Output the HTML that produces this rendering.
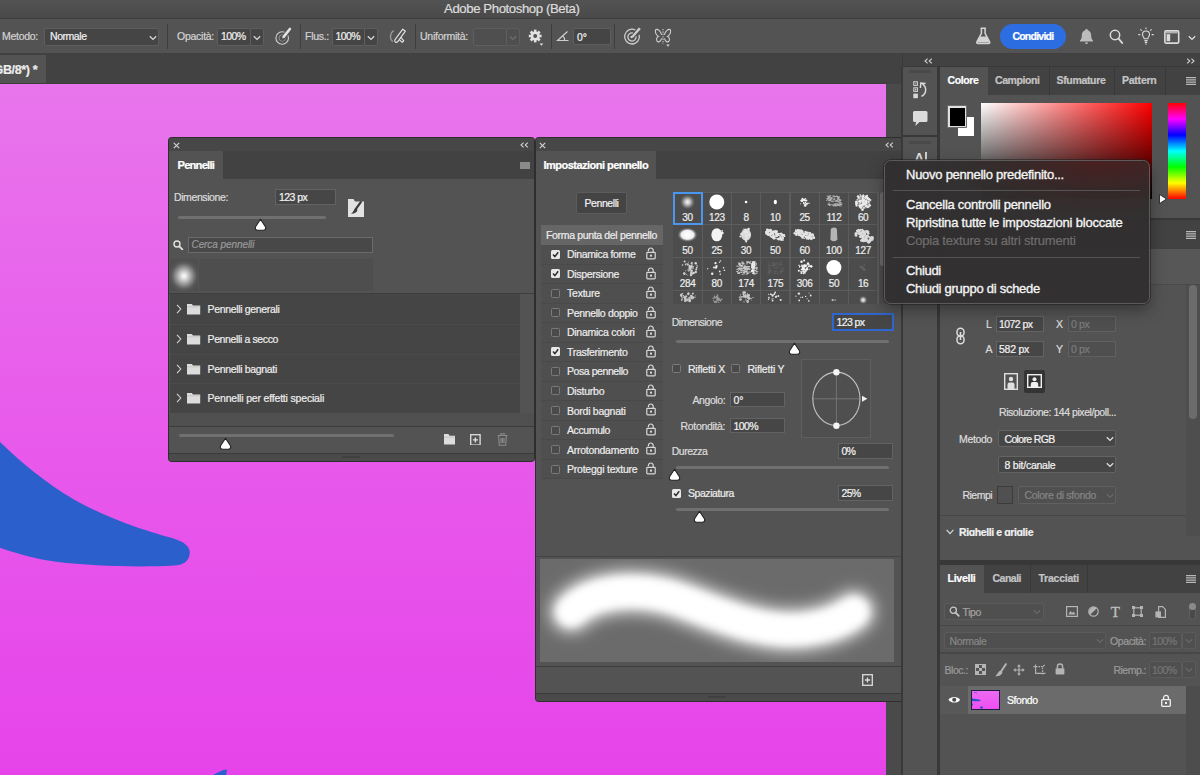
<!DOCTYPE html>
<html lang="it"><head><meta charset="utf-8"><title>Adobe Photoshop (Beta)</title>
<style>
*{box-sizing:border-box;margin:0;padding:0}
html,body{width:1200px;height:775px;overflow:hidden;background:#4a4a4a}
body{font-family:"Liberation Sans",sans-serif;font-size:10.5px;color:#d6d6d6;position:relative}
.abs{position:absolute}
.t{position:absolute;white-space:nowrap;line-height:14px;-webkit-text-stroke:0.22px currentColor}
</style></head><body>
<div class="abs" style="left:0.0px;top:0.0px;width:1200.0px;height:18.0px;background:linear-gradient(180deg,#535353,#4a4a4a);"></div>
<div class="abs" style="left:0.0px;top:18.0px;width:1200.0px;height:1.0px;background:#3b3b3b;"></div>
<div class="t" style="left:444.0px;top:1.6px;font-size:13.2px;color:#dcdcdc;letter-spacing:-0.41px;">Adobe Photoshop (Beta)</div>
<div class="abs" style="left:0.0px;top:19.0px;width:1200.0px;height:35.0px;background:#535353;"></div>
<div class="abs" style="left:0.0px;top:53.0px;width:1200.0px;height:1.0px;background:#404040;"></div>
<div class="abs" style="left:0.0px;top:54.0px;width:903.0px;height:30.0px;background:#424242;"></div>
<div class="abs" style="left:0.0px;top:55.0px;width:46.0px;height:29.0px;background:#535353;"></div>
<div class="t" style="left:-6.5px;top:62.5px;font-size:12.5px;color:#ececec;letter-spacing:-0.34px;font-weight:bold;">GB/8*) *</div>
<div class="abs" style="left:0.0px;top:83.0px;width:886.0px;height:1.0px;background:#3c3e3c;"></div>
<div class="t" style="left:2.0px;top:28.8px;font-size:10.5px;color:#d2d2d2;letter-spacing:-0.28px;">Metodo:</div>
<div class="abs" style="left:44.0px;top:28.0px;width:115.0px;height:17.5px;background:#454545;border:1px solid #5e5e5e;border-radius:2px;"></div>
<div class="t" style="left:50.0px;top:28.8px;font-size:10.5px;color:#f0f0f0;letter-spacing:-0.45px;">Normale</div>
<svg class="abs" style="left:149.0px;top:34.5px;" width="8" height="6" viewBox="0 0 8 6"><path d="M0.8 1.2 L4 4.4 L7.2 1.2" fill="none" stroke="#d8d8d8" stroke-width="1.3"/></svg>
<div class="abs" style="left:167.0px;top:24.0px;width:1.0px;height:25.0px;background:#3e3e3e;"></div>
<div class="t" style="left:177.0px;top:28.8px;font-size:10.5px;color:#d2d2d2;letter-spacing:-0.26px;">Opacità:</div>
<div class="abs" style="left:217.0px;top:28.0px;width:34.0px;height:17.5px;background:#454545;border:1px solid #5e5e5e;border-radius:2px;"></div>
<div class="abs" style="left:250.0px;top:28.0px;width:14.0px;height:17.5px;background:#454545;border:1px solid #5e5e5e;border-radius:2px;"></div>
<div class="t" style="left:221.0px;top:28.8px;font-size:10.5px;color:#f0f0f0;letter-spacing:-0.59px;">100%</div>
<svg class="abs" style="left:253.0px;top:34.5px;" width="8" height="6" viewBox="0 0 8 6"><path d="M0.8 1.2 L4 4.4 L7.2 1.2" fill="none" stroke="#d8d8d8" stroke-width="1.3"/></svg>
<svg class="abs" style="left:273.0px;top:26.0px;" width="22" height="22" viewBox="0 0 22 22"><circle cx="9.200" cy="12" r="6.300" fill="none" stroke="#cfcfcf" stroke-width="1.100"/><circle cx="9.200" cy="12" r="3.200" fill="none" stroke="#8e8e8e" stroke-width="1"/><path d="M9.400 12.400 L16.800 3.200" stroke="#535353" stroke-width="4.600" stroke-linecap="round"/><path d="M10.800 10.600 L16.900 3" stroke="#e4e4e4" stroke-width="2.600" stroke-linecap="round"/><path d="M9 12.600 L10.400 9.600 L12 11Z" fill="#e4e4e4"/></svg>
<div class="abs" style="left:300.0px;top:24.0px;width:1.0px;height:25.0px;background:#3e3e3e;"></div>
<div class="t" style="left:305.0px;top:28.8px;font-size:10.5px;color:#d2d2d2;letter-spacing:-0.28px;">Flus.:</div>
<div class="abs" style="left:332.0px;top:28.0px;width:33.0px;height:17.5px;background:#454545;border:1px solid #5e5e5e;border-radius:2px;"></div>
<div class="abs" style="left:364.0px;top:28.0px;width:14.0px;height:17.5px;background:#454545;border:1px solid #5e5e5e;border-radius:2px;"></div>
<div class="t" style="left:335.5px;top:28.8px;font-size:10.5px;color:#f0f0f0;letter-spacing:-0.59px;">100%</div>
<svg class="abs" style="left:367.0px;top:34.5px;" width="8" height="6" viewBox="0 0 8 6"><path d="M0.8 1.2 L4 4.4 L7.2 1.2" fill="none" stroke="#d8d8d8" stroke-width="1.3"/></svg>
<svg class="abs" style="left:386.0px;top:26.0px;" width="24" height="22" viewBox="0 0 24 22"><path d="M7.600 4.600 A7 7 0 0 0 6.600 15.600" fill="none" stroke="#9a9a9a" stroke-width="1.500"/><g fill="#535353" stroke="#e4e4e4" stroke-width="1.100" stroke-linejoin="round"><path d="M12.800 13.200 L16.200 16.400 L17.800 14.800 L14.800 11.400Z"/><path d="M16.800 3.200 L19.400 5.200 L11.600 15.800 Q9.800 17.200 8.800 15.200 Q8.600 14.200 9.200 13.400 Z"/></g></svg>
<div class="abs" style="left:415.0px;top:24.0px;width:1.0px;height:25.0px;background:#3e3e3e;"></div>
<div class="t" style="left:420.0px;top:28.8px;font-size:10.5px;color:#d2d2d2;letter-spacing:-0.25px;">Uniformità:</div>
<div class="abs" style="left:473.0px;top:28.0px;width:34.0px;height:17.5px;background:#4f4f4f;border:1px solid #5e5e5e;border-radius:2px;"></div>
<div class="abs" style="left:506.0px;top:28.0px;width:14.0px;height:17.5px;background:#4f4f4f;border:1px solid #5e5e5e;border-radius:2px;"></div>
<svg class="abs" style="left:509.0px;top:34.5px;" width="8" height="6" viewBox="0 0 8 6"><path d="M0.8 1.2 L4 4.4 L7.2 1.2" fill="none" stroke="#6e6e6e" stroke-width="1.3"/></svg>
<svg class="abs" style="left:526.0px;top:27.0px;" width="22" height="22" viewBox="0 0 22 22"><g transform="translate(9.200 9)"><g fill="#e2e2e2"><rect x="-1.300" y="-6.400" width="2.600" height="12.800"/><rect x="-1.300" y="-6.400" width="2.600" height="12.800" transform="rotate(45)"/><rect x="-1.300" y="-6.400" width="2.600" height="12.800" transform="rotate(90)"/><rect x="-1.300" y="-6.400" width="2.600" height="12.800" transform="rotate(135)"/><circle r="4.600"/></g><circle r="2" fill="#535353"/></g><path d="M13.600 16.600 h3.600 l-1.800 2.200z" fill="#e2e2e2"/></svg>
<div class="abs" style="left:551.0px;top:24.0px;width:1.0px;height:25.0px;background:#3e3e3e;"></div>
<svg class="abs" style="left:556.0px;top:29.0px;" width="14" height="14" viewBox="0 0 14 14"><g fill="none" stroke="#cfcfcf" stroke-width="1.2"><path d="M11.5 2.5 L1.5 11.5 H12.5"/><path d="M6.8 6.9 A5.5 5.5 0 0 1 8.6 11.4"/></g></svg>
<div class="abs" style="left:573.0px;top:28.0px;width:38.0px;height:17.0px;background:#454545;border:1px solid #5e5e5e;border-radius:2px;"></div>
<div class="t" style="left:577.0px;top:29.5px;font-size:10.5px;color:#f0f0f0;">0°</div>
<div class="abs" style="left:614.0px;top:24.0px;width:1.0px;height:25.0px;background:#3e3e3e;"></div>
<svg class="abs" style="left:621.0px;top:25.0px;" width="24" height="24" viewBox="0 0 24 24"><g fill="none" stroke="#cfcfcf" stroke-width="1.3"><path d="M14.4 5 A7.4 7.4 0 1 0 18.2 9.8"/><path d="M11.8 8 A4.1 4.1 0 1 0 15 11.4"/></g><circle cx="10.6" cy="12" r="1.3" fill="#cfcfcf"/><path d="M10.4 11.4 L17.8 2.4 L19.8 4 L12 12.8 Z" fill="#cfcfcf"/></svg>
<svg class="abs" style="left:653.5px;top:27.5px;" width="18" height="20" viewBox="0 0 18 20"><g fill="none" stroke="#cfcfcf" stroke-width="1.100"><path d="M7.600 6.800 C6.600 2.600 3.600 0.800 1.800 1.600 C0.800 3.200 1.600 7 4.400 8.400 C2.600 9 2.200 11.400 3 13.200 C4.600 14.800 6.800 13.200 7.600 10.400"/><path d="M10.400 6.800 C11.400 2.600 14.400 0.800 16.200 1.600 C17.200 3.200 16.400 7 13.600 8.400 C15.400 9 15.800 11.400 15 13.200 C13.400 14.800 11.200 13.200 10.400 10.400"/><path d="M9 1 V16" stroke-dasharray="1.300 1.100"/></g><path d="M12.200 16.600 h3.600 l-1.800 2.200z" fill="#cfcfcf"/></svg>
<svg class="abs" style="left:976.0px;top:27.0px;" width="14.5" height="18" viewBox="2 1.500 16 19"><path d="M7 2.500 h6 M8 2.500 v5.500 L3 17.500 a1.200 1.200 0 0 0 1 1.800 h12 a1.200 1.200 0 0 0 1 -1.800 L12 8 V2.500" fill="none" stroke="#d4d4d4" stroke-width="1.700"/><path d="M6.400 11.500 h7.200 l3.500 6.800 h-14.200z" fill="#d4d4d4"/></svg>
<div class="abs" style="left:1000.0px;top:24.0px;width:65.6px;height:25.0px;background:#2c6ee2;border-radius:12.5px;"></div>
<div class="t" style="left:1012.4px;top:29.3px;font-size:10.5px;color:#ffffff;letter-spacing:-0.76px;font-weight:bold;">Condividi</div>
<svg class="abs" style="left:1080.0px;top:27.5px;" width="13" height="18" viewBox="2.500 2 15 18.500"><path d="M10 2 c-0.900 0 -1.500 0.700 -1.500 1.500 C5.800 4.300 4.600 6.800 4.600 9.500 c0 3.500 -1 4.500 -2.100 5.700 v1.300 h15 v-1.300 c-1.100 -1.200 -2.100 -2.200 -2.100 -5.700 c0 -2.700 -1.200 -5.200 -3.900 -6 C11.500 2.700 10.900 2 10 2z M8.200 17.500 a1.800 1.800 0 0 0 3.600 0z" fill="#bcbcbc"/></svg>
<svg class="abs" style="left:1109.0px;top:28.5px;" width="14.5" height="15.5" viewBox="0 0 14.5 15.5"><circle cx="6" cy="6" r="4.700" fill="none" stroke="#dcdcdc" stroke-width="1.500"/><path d="M9.500 9.500 L13.200 14" stroke="#dcdcdc" stroke-width="1.900" stroke-linecap="round"/></svg>
<svg class="abs" style="left:1138.0px;top:26.5px;" width="16" height="19" viewBox="0 0 16 19"><g fill="none" stroke="#dcdcdc" stroke-width="1.100"><path d="M6.200 11.800 c0 -1.600 -1.700 -2.200 -1.700 -4.300 a3.500 3.500 0 0 1 7 0 c0 2.100 -1.700 2.700 -1.700 4.300z"/><path d="M6.400 13.600 h3.200 M6.800 15.400 h2.400 M7.300 17 h1.400"/><path d="M8 0.400 v1.900 M2.400 2.400 l1.300 1.300 M13.600 2.400 l-1.300 1.300 M0.300 7.600 h2 M13.700 7.600 h2"/></g></svg>
<svg class="abs" style="left:1164.4px;top:30.0px;" width="15.6" height="14" viewBox="0 0 15.6 14"><rect x="0.900" y="0.900" width="13.800" height="12.200" rx="1" fill="none" stroke="#dcdcdc" stroke-width="1.600"/><rect x="2.600" y="4.200" width="3.600" height="7" fill="#dcdcdc"/><path d="M2 2.800 h11.600" stroke="#dcdcdc" stroke-width="1"/></svg>
<svg class="abs" style="left:1188.0px;top:34.5px;" width="8" height="6" viewBox="0 0 8 6"><path d="M0.8 1.2 L4 4.4 L7.2 1.2" fill="none" stroke="#dcdcdc" stroke-width="1.3"/></svg>
<div class="abs" style="left:0;top:84px;width:886px;height:691px;background:linear-gradient(180deg,#e875ec 0%,#e85deb 45%,#e644ea 100%);overflow:hidden"><svg class="abs" style="left:0;top:0" width="886" height="691" viewBox="0 84 886 691"><path d="M-2 440 C20 462 45 482 73 499 C110 520 150 532 172 538 C186 542 191 548 189.500 555 C188 562 183 565 174 565.500 C140 567.500 90 566 58 562 C35 559 15 553 -2 547 Z" fill="#2b5fcb"/><path d="M212 776 C218 772 222 770 227 769.500 L226 776 Z" fill="#2b5fcb"/></svg></div>
<div class="abs" style="left:886.0px;top:84.0px;width:15.0px;height:691.0px;background:#4a4a4a;"></div>
<div class="abs" style="left:900.5px;top:67.0px;width:2.5px;height:708.0px;background:#393939;"></div>
<div class="abs" style="left:903.0px;top:54.0px;width:297.0px;height:721.0px;background:#383838;"></div>
<div class="abs" style="left:901.0px;top:54.0px;width:299.0px;height:12.0px;background:#424242;"></div>
<div class="abs" style="left:901.5px;top:54.0px;width:1.0px;height:13.0px;background:#393939;"></div>
<svg class="abs" style="left:924.0px;top:57.5px;" width="9" height="6" viewBox="0 0 9 6"><path d="M3.600 0.600 L1 3 L3.600 5.400 M7.800 0.600 L5.200 3 L7.800 5.400" fill="none" stroke="#cfcfcf" stroke-width="1.100"/></svg>
<svg class="abs" style="left:1186.0px;top:57.5px;" width="9" height="6" viewBox="0 0 9 6"><path d="M1.200 0.600 L3.800 3 L1.200 5.400 M5.400 0.600 L8 3 L5.400 5.400" fill="none" stroke="#cfcfcf" stroke-width="1.100"/></svg>
<div class="abs" style="left:903.0px;top:67.0px;width:34.0px;height:708.0px;background:#535353;"></div>
<div class="abs" style="left:909.0px;top:70.0px;width:22.0px;height:3.0px;background:#4a4a4a;"></div>
<svg class="abs" style="left:912.0px;top:80.0px;" width="17" height="20" viewBox="0 0 17 20"><g fill="none" stroke="#d8d8d8" stroke-width="1"><rect x="1.800" y="1.800" width="3.600" height="3.600"/><rect x="1.800" y="7.800" width="3.600" height="3.600"/></g><rect x="1.300" y="13.600" width="4.600" height="4.600" fill="#d8d8d8"/><rect x="2.900" y="8.900" width="1.400" height="1.400" fill="#d8d8d8"/><rect x="2.900" y="2.900" width="1.400" height="1.400" fill="#9a9a9a"/><path d="M9.400 16.400 C14.600 13.600 15.200 7.200 10.400 3.800" fill="none" stroke="#d8d8d8" stroke-width="1.500"/><path d="M8.400 8 L8.800 3 L13.600 3.600" fill="none" stroke="#d8d8d8" stroke-width="1.500"/></svg>
<svg class="abs" style="left:913.0px;top:111.0px;" width="14.5" height="15" viewBox="0 0 14.5 15"><path d="M1.500 0 h11.500 a1.500 1.500 0 0 1 1.500 1.500 v8 a1.500 1.500 0 0 1 -1.500 1.500 h-6.500 l-4.200 4 l0.800 -4 h-1.600 a1.500 1.500 0 0 1 -1.500 -1.500 v-8 a1.500 1.500 0 0 1 1.500 -1.500z" fill="#dcdcdc"/></svg>
<div class="abs" style="left:903.0px;top:135.0px;width:34.0px;height:2.0px;background:#383838;"></div>
<div class="abs" style="left:909.0px;top:141.0px;width:22.0px;height:3.0px;background:#4a4a4a;"></div>
<div class="t" style="left:913.7px;top:152.8px;font-size:16px;color:#e8e8e8;">A</div>
<div class="abs" style="left:925.0px;top:152.0px;width:2.0px;height:14.0px;background:#d0d0d0;"></div>
<div class="abs" style="left:940.0px;top:67.0px;width:260.0px;height:150.5px;background:#535353;"></div>
<div class="abs" style="left:940.0px;top:67.0px;width:260.0px;height:28.0px;background:#424242;"></div>
<div class="abs" style="left:940.0px;top:67.0px;width:48.0px;height:29.0px;background:#535353;"></div>
<div class="t" style="left:947.5px;top:72.8px;font-size:10.5px;color:#ffffff;letter-spacing:-0.38px;font-weight:bold;">Colore</div>
<div class="abs" style="left:1048.5px;top:67.0px;width:1.0px;height:28.0px;background:#383838;"></div>
<div class="abs" style="left:1114.0px;top:67.0px;width:1.0px;height:28.0px;background:#383838;"></div>
<div class="abs" style="left:1165.0px;top:67.0px;width:1.0px;height:28.0px;background:#383838;"></div>
<div class="t" style="left:995.0px;top:72.8px;font-size:10.5px;color:#c4c4c4;letter-spacing:-0.42px;font-weight:bold;">Campioni</div>
<div class="t" style="left:1056.5px;top:72.8px;font-size:10.5px;color:#c4c4c4;letter-spacing:-0.33px;font-weight:bold;">Sfumature</div>
<div class="t" style="left:1122.0px;top:72.8px;font-size:10.5px;color:#c4c4c4;letter-spacing:-0.24px;font-weight:bold;">Pattern</div>
<svg class="abs" style="left:1186.0px;top:76.5px;" width="10" height="8" viewBox="0 0 10 8"><path d="M0 0.700 h10 M0 2.900 h10 M0 5.100 h10 M0 7.300 h10" stroke="#b8b8b8" stroke-width="1.300"/></svg>
<div class="abs" style="left:958.0px;top:117.0px;width:16.0px;height:19.0px;background:#ffffff;"></div>
<div class="abs" style="left:947.0px;top:105.0px;width:20.0px;height:23.0px;background:#6e6e6e;border-radius:1px;"></div>
<div class="abs" style="left:948.0px;top:106.0px;width:18.0px;height:21.0px;background:#e0e0e0;"></div>
<div class="abs" style="left:949.5px;top:107.5px;width:15.0px;height:18.0px;background:#000000;"></div>
<div class="abs" style="left:980.5px;top:102.5px;width:171.300px;height:96.5px;background:linear-gradient(180deg,rgba(0,0,0,0) 0%,#000 100%),linear-gradient(90deg,#fff 0%,#ff0000 100%)"></div>
<div class="abs" style="left:1168px;top:102.5px;width:18px;height:96.5px;background:linear-gradient(180deg,#ff0000 0%,#ff00ff 16.600%,#0000ff 33.300%,#00ffff 50%,#00ff00 66.600%,#ffff00 83.300%,#ff0000 100%)"></div>
<svg class="abs" style="left:1158.0px;top:192.8px;" width="10" height="12" viewBox="0 0 10 12"><path d="M1.400 1.300 L8.600 6 L1.400 10.700 Z" fill="#ffffff" stroke="#2a2a2a" stroke-width="1" stroke-linejoin="round"/></svg>
<div class="abs" style="left:940.0px;top:220.0px;width:260.0px;height:340.0px;background:#535353;"></div>
<div class="abs" style="left:940.0px;top:220.0px;width:260.0px;height:28.5px;background:#424242;"></div>
<svg class="abs" style="left:1186.0px;top:231.0px;" width="10" height="8" viewBox="0 0 10 8"><path d="M0 0.700 h10 M0 2.900 h10 M0 5.100 h10 M0 7.300 h10" stroke="#b8b8b8" stroke-width="1.300"/></svg>
<div class="abs" style="left:940.0px;top:248.5px;width:260.0px;height:35.5px;background:#575757;"></div>
<div class="abs" style="left:940.0px;top:284.0px;width:260.0px;height:1.0px;background:#4a4a4a;"></div>
<div class="abs" style="left:1186.0px;top:285.0px;width:14.0px;height:251.0px;background:#4e4e4e;"></div>
<div class="abs" style="left:1189.0px;top:285.0px;width:7.5px;height:134.0px;background:#6c6c6c;border-radius:4px;"></div>
<svg class="abs" style="left:955.0px;top:327.0px;" width="11" height="18" viewBox="0 0 11 18"><g fill="none" stroke="#dcdcdc" stroke-width="1.500"><rect x="2" y="1.200" width="7" height="8" rx="3.500"/><rect x="2" y="8.800" width="7" height="8" rx="3.500"/></g><rect x="4.700" y="5" width="1.600" height="8" fill="#dcdcdc"/></svg>
<div class="t" style="left:986.0px;top:317.0px;font-size:10.5px;color:#dcdcdc;">L</div>
<div class="abs" style="left:995.5px;top:316.0px;width:48.5px;height:16.0px;background:#464646;border:1px solid #636363;"></div>
<div class="t" style="left:999.0px;top:317.0px;font-size:10.5px;color:#f2f2f2;letter-spacing:-0.55px;">1072 px</div>
<div class="t" style="left:1056.0px;top:317.0px;font-size:10.5px;color:#dcdcdc;">X</div>
<div class="abs" style="left:1067.5px;top:316.0px;width:48.0px;height:16.0px;background:#4f4f4f;border:1px solid #606060;"></div>
<div class="t" style="left:1071.0px;top:317.0px;font-size:10.5px;color:#7c7c7c;letter-spacing:-0.34px;">0 px</div>
<div class="t" style="left:985.5px;top:342.0px;font-size:10.5px;color:#dcdcdc;">A</div>
<div class="abs" style="left:995.5px;top:341.0px;width:48.5px;height:16.0px;background:#464646;border:1px solid #636363;"></div>
<div class="t" style="left:999.0px;top:342.0px;font-size:10.5px;color:#f2f2f2;letter-spacing:-0.25px;">582 px</div>
<div class="t" style="left:1056.0px;top:342.0px;font-size:10.5px;color:#dcdcdc;">Y</div>
<div class="abs" style="left:1067.5px;top:341.0px;width:48.0px;height:16.0px;background:#4f4f4f;border:1px solid #606060;"></div>
<div class="t" style="left:1071.0px;top:342.0px;font-size:10.5px;color:#7c7c7c;letter-spacing:-0.34px;">0 px</div>
<svg class="abs" style="left:1004.0px;top:373.0px;" width="14" height="17" viewBox="0 0 14 17"><rect x="0.700" y="0.700" width="12.600" height="15.600" fill="none" stroke="#e0e0e0" stroke-width="1.400"/><circle cx="7" cy="6" r="2.200" fill="#e0e0e0"/><path d="M3.500 16 v-4.500 a2 2 0 0 1 2 -2 h3 a2 2 0 0 1 2 2 v4.500z" fill="#e0e0e0"/></svg>
<div class="abs" style="left:1023.5px;top:369.5px;width:21.5px;height:23.5px;background:#343434;border-radius:2px;"></div>
<svg class="abs" style="left:1027.0px;top:374.0px;" width="15" height="14" viewBox="0 0 15 14"><rect x="0.700" y="0.700" width="13.600" height="12.600" fill="none" stroke="#f0f0f0" stroke-width="1.400"/><circle cx="7.500" cy="5.300" r="2" fill="#f0f0f0"/><path d="M3.800 13 v-3 a2 2 0 0 1 2 -2 h3.400 a2 2 0 0 1 2 2 v3z" fill="#f0f0f0"/></svg>
<div class="t" style="left:999.0px;top:404.5px;font-size:10.5px;color:#dcdcdc;letter-spacing:-0.44px;">Risoluzione: 144 pixel/poll...</div>
<div class="t" style="left:959.0px;top:431.5px;font-size:10.5px;color:#dcdcdc;letter-spacing:-0.34px;">Metodo</div>
<div class="abs" style="left:997.5px;top:430.0px;width:118.5px;height:17.0px;background:#464646;border:1px solid #636363;border-radius:2px;"></div>
<div class="t" style="left:1004.5px;top:431.5px;font-size:10.5px;color:#f2f2f2;letter-spacing:-0.66px;">Colore RGB</div>
<svg class="abs" style="left:1105.5px;top:436.0px;" width="8" height="6" viewBox="0 0 8 6"><path d="M0.8 1.2 L4 4.4 L7.2 1.2" fill="none" stroke="#e0e0e0" stroke-width="1.3"/></svg>
<div class="abs" style="left:997.5px;top:456.0px;width:118.5px;height:17.0px;background:#464646;border:1px solid #636363;border-radius:2px;"></div>
<div class="t" style="left:1004.5px;top:457.5px;font-size:10.5px;color:#f2f2f2;letter-spacing:-0.23px;">8 bit/canale</div>
<svg class="abs" style="left:1105.5px;top:462.0px;" width="8" height="6" viewBox="0 0 8 6"><path d="M0.8 1.2 L4 4.4 L7.2 1.2" fill="none" stroke="#e0e0e0" stroke-width="1.3"/></svg>
<div class="t" style="left:962.5px;top:488.0px;font-size:10.5px;color:#dcdcdc;letter-spacing:-0.53px;">Riempi</div>
<div class="abs" style="left:997.0px;top:486.0px;width:16.0px;height:18.0px;background:#505050;border:1px solid #3c3c3c;"></div>
<div class="abs" style="left:1018.0px;top:486.0px;width:98.0px;height:18.0px;background:#505050;border:1px solid #606060;border-radius:2px;"></div>
<div class="t" style="left:1024.5px;top:488.0px;font-size:10.5px;color:#858585;letter-spacing:-0.31px;">Colore di sfondo</div>
<svg class="abs" style="left:1105.5px;top:492.5px;" width="8" height="6" viewBox="0 0 8 6"><path d="M0.8 1.2 L4 4.4 L7.2 1.2" fill="none" stroke="#686868" stroke-width="1.3"/></svg>
<div class="abs" style="left:940.0px;top:515.0px;width:246.0px;height:1.0px;background:#474747;"></div>
<svg class="abs" style="left:945.5px;top:529.0px;" width="8" height="6" viewBox="0 0 8 6"><path d="M0.600 0.800 L4 4.600 L7.400 0.800" fill="none" stroke="#d8d8d8" stroke-width="1.200"/></svg>
<div class="abs" style="left:959px;top:525px;width:90px;height:10.800px;overflow:hidden"><div class="t" style="left:0;top:0;font-size:10.500px;font-weight:bold;color:#f0f0f0;letter-spacing:-0.39px">Righelli e griglie</div></div>
<div class="abs" style="left:940.0px;top:565.0px;width:260.0px;height:210.0px;background:#535353;"></div>
<div class="abs" style="left:940.0px;top:565.0px;width:260.0px;height:28.0px;background:#424242;"></div>
<div class="abs" style="left:940.0px;top:565.0px;width:44.0px;height:29.0px;background:#535353;"></div>
<div class="abs" style="left:1030.0px;top:565.0px;width:1.0px;height:28.0px;background:#383838;"></div>
<div class="abs" style="left:1087.0px;top:565.0px;width:1.0px;height:28.0px;background:#383838;"></div>
<div class="t" style="left:947.5px;top:570.7px;font-size:10.5px;color:#ffffff;letter-spacing:-0.25px;font-weight:bold;">Livelli</div>
<div class="t" style="left:992.5px;top:570.7px;font-size:10.5px;color:#c4c4c4;letter-spacing:-0.50px;font-weight:bold;">Canali</div>
<div class="t" style="left:1038.5px;top:570.7px;font-size:10.5px;color:#c4c4c4;letter-spacing:-0.23px;font-weight:bold;">Tracciati</div>
<svg class="abs" style="left:1186.0px;top:574.5px;" width="10" height="8" viewBox="0 0 10 8"><path d="M0 0.700 h10 M0 2.900 h10 M0 5.100 h10 M0 7.300 h10" stroke="#b8b8b8" stroke-width="1.300"/></svg>
<div class="abs" style="left:943.5px;top:602.5px;width:100.0px;height:17.5px;background:#4f4f4f;border:1px solid #5b5b5b;border-radius:2px;"></div>
<svg class="abs" style="left:949.0px;top:606.0px;" width="11" height="11" viewBox="0 0 11 11"><circle cx="4.300" cy="4.300" r="3.100" fill="none" stroke="#c8c8c8" stroke-width="1.300"/><path d="M6.600 6.600 L9.800 9.800" stroke="#c8c8c8" stroke-width="1.700" stroke-linecap="round"/></svg>
<div class="t" style="left:962.5px;top:604.5px;font-size:10.5px;color:#a2a2a2;letter-spacing:-0.38px;">Tipo</div>
<svg class="abs" style="left:1032.5px;top:609.0px;" width="8" height="6" viewBox="0 0 8 6"><path d="M0.8 1.2 L4 4.4 L7.2 1.2" fill="none" stroke="#686868" stroke-width="1.3"/></svg>
<svg class="abs" style="left:1066.0px;top:606.0px;" width="12" height="11" viewBox="0 0 12 11"><rect x="0.600" y="0.600" width="10.800" height="9.800" fill="none" stroke="#b4b4b4" stroke-width="1.200"/><path d="M2.400 8.400 L4.600 4.800 L6 7 L7.400 5.600 L9.600 8.400Z" fill="#b4b4b4"/></svg>
<svg class="abs" style="left:1088.0px;top:606.0px;" width="11" height="11" viewBox="0 0 11 11"><circle cx="5.500" cy="5.500" r="4.700" fill="none" stroke="#b4b4b4" stroke-width="1.200"/><path d="M2.200 8.800 A4.700 4.700 0 0 1 8.800 2.200 Z" fill="#b4b4b4"/></svg>
<div class="t" style="left:1110.8px;top:605.3px;font-size:15px;color:#c0c0c0;font-family:'Liberation Serif',serif;-webkit-text-stroke:0.300px #c0c0c0;">T</div>
<svg class="abs" style="left:1131.5px;top:606.0px;" width="11" height="11" viewBox="0 0 11 11"><rect x="1.800" y="1.800" width="7.400" height="7.400" fill="none" stroke="#b4b4b4" stroke-width="1.200"/><g fill="#b4b4b4"><rect x="0" y="0" width="3" height="3"/><rect x="8" y="0" width="3" height="3"/><rect x="0" y="8" width="3" height="3"/><rect x="8" y="8" width="3" height="3"/></g></svg>
<svg class="abs" style="left:1154.5px;top:605.5px;" width="11" height="12" viewBox="0 0 11 12"><path d="M3.600 0.600 h4 l2.800 2.800 v8 h-6.800z" fill="none" stroke="#b4b4b4" stroke-width="1.200"/><rect x="0.400" y="5.400" width="5.600" height="6" fill="#b4b4b4"/></svg>
<div class="abs" style="left:1188.5px;top:602.5px;width:7.5px;height:17.5px;background:#4a4a4a;border:1px solid #606060;border-radius:4px;"></div>
<div class="abs" style="left:1189.0px;top:603.0px;width:6.5px;height:7.0px;background:#8a8a8a;border-radius:3.5px;"></div>
<div class="abs" style="left:940.0px;top:624.8px;width:260.0px;height:1.5px;background:#474747;"></div>
<div class="abs" style="left:943.5px;top:632.0px;width:162.5px;height:17.0px;background:#4f4f4f;border:1px solid #5b5b5b;border-radius:2px;"></div>
<div class="t" style="left:949.5px;top:633.5px;font-size:10.5px;color:#868686;letter-spacing:-0.38px;">Normale</div>
<svg class="abs" style="left:1095.5px;top:638.0px;" width="8" height="6" viewBox="0 0 8 6"><path d="M0.8 1.2 L4 4.4 L7.2 1.2" fill="none" stroke="#686868" stroke-width="1.3"/></svg>
<div class="t" style="left:1110.0px;top:633.5px;font-size:10.5px;color:#9a9a9a;letter-spacing:-0.39px;">Opacità:</div>
<div class="abs" style="left:1148.5px;top:632.0px;width:33.5px;height:17.0px;background:#4f4f4f;border:1px solid #5b5b5b;border-radius:2px;"></div>
<div class="abs" style="left:1181.5px;top:632.0px;width:14.5px;height:17.0px;background:#4f4f4f;border:1px solid #5b5b5b;border-radius:2px;"></div>
<div class="t" style="left:1152.0px;top:633.5px;font-size:10.5px;color:#767676;letter-spacing:-0.59px;">100%</div>
<svg class="abs" style="left:1185.0px;top:638.0px;" width="8" height="6" viewBox="0 0 8 6"><path d="M0.8 1.2 L4 4.4 L7.2 1.2" fill="none" stroke="#686868" stroke-width="1.3"/></svg>
<div class="abs" style="left:940.0px;top:652.3px;width:260.0px;height:1.5px;background:#474747;"></div>
<div class="t" style="left:944.5px;top:662.5px;font-size:10.5px;color:#9a9a9a;letter-spacing:-0.46px;">Bloc.:</div>
<svg class="abs" style="left:974.5px;top:664.0px;" width="11" height="11" viewBox="0 0 11 11"><rect x="0.500" y="0.500" width="10" height="10" fill="none" stroke="#b4b4b4" stroke-width="1"/><g fill="#b4b4b4"><rect x="1" y="1" width="3" height="3"/><rect x="7" y="1" width="3" height="3"/><rect x="4" y="4" width="3" height="3"/><rect x="1" y="7" width="3" height="3"/><rect x="7" y="7" width="3" height="3"/></g></svg>
<svg class="abs" style="left:994.0px;top:662.5px;" width="13" height="14" viewBox="0 0 13 14"><path d="M7.400 8 L11.800 1.200" stroke="#b4b4b4" stroke-width="2" stroke-linecap="round"/><path d="M6.200 7.400 L8.400 9.200 C8 11.800 5 13.400 1 13.200 C3.400 12 3.400 9 6.200 7.400Z" fill="#b4b4b4"/></svg>
<svg class="abs" style="left:1013.0px;top:663.5px;" width="12" height="12" viewBox="0 0 12 12"><path d="M6 0.300 L8 2.600 H6.600 V5.400 H9.400 V4 L11.700 6 L9.400 8 V6.600 H6.600 V9.400 H8 L6 11.700 L4 9.400 H5.400 V6.600 H2.600 V8 L0.300 6 L2.600 4 V5.400 H5.400 V2.600 H4 Z" fill="#b4b4b4"/></svg>
<svg class="abs" style="left:1033.0px;top:663.5px;" width="13" height="12" viewBox="0 0 13 12"><g fill="none" stroke="#b4b4b4" stroke-width="1.100"><path d="M2.600 0.500 V9.400 H12.500"/><path d="M0.300 2.600 H9.600 V11.600" stroke-dasharray="1.600 1"/><path d="M11.800 0.800 L9.800 2.600"/></g></svg>
<svg class="abs" style="left:1054.5px;top:663.0px;" width="10" height="12" viewBox="0 0 10 12"><path d="M2.400 5.400 V3.600 a2.600 2.600 0 0 1 5.200 0 V5.400" fill="none" stroke="#b4b4b4" stroke-width="1.400"/><rect x="0.600" y="5.200" width="8.800" height="6.400" rx="0.800" fill="#b4b4b4"/></svg>
<div class="t" style="left:1113.5px;top:662.5px;font-size:10.5px;color:#9a9a9a;letter-spacing:-0.53px;">Riemp.:</div>
<div class="abs" style="left:1148.5px;top:661.0px;width:33.5px;height:17.0px;background:#4f4f4f;border:1px solid #5b5b5b;border-radius:2px;"></div>
<div class="abs" style="left:1181.5px;top:661.0px;width:14.5px;height:17.0px;background:#4f4f4f;border:1px solid #5b5b5b;border-radius:2px;"></div>
<div class="t" style="left:1152.0px;top:662.5px;font-size:10.5px;color:#767676;letter-spacing:-0.59px;">100%</div>
<svg class="abs" style="left:1185.0px;top:667.0px;" width="8" height="6" viewBox="0 0 8 6"><path d="M0.8 1.2 L4 4.4 L7.2 1.2" fill="none" stroke="#686868" stroke-width="1.3"/></svg>
<div class="abs" style="left:940.0px;top:685.5px;width:28.0px;height:28.5px;background:#585858;"></div>
<div class="abs" style="left:968.0px;top:685.5px;width:218.0px;height:28.5px;background:#6b6b6b;"></div>
<div class="abs" style="left:1186.0px;top:685.5px;width:14.0px;height:89.5px;background:#4d4d4d;"></div>
<svg class="abs" style="left:947.5px;top:695.2px;" width="12.5" height="9.6" viewBox="0 0 14 10"><path d="M0.500 5 C3 0.800 11 0.800 13.500 5 C11 9.200 3 9.200 0.500 5Z" fill="#ffffff"/><circle cx="7" cy="5" r="2.300" fill="#4a4a4a"/></svg>
<div class="abs" style="left:970.5px;top:690px;width:29.500px;height:19.500px;background:linear-gradient(180deg,#ec6af0,#f04ef3);border:1px solid #1e1e40;overflow:hidden"><svg class="abs" style="left:0;top:0" width="28" height="18" viewBox="0 0 28 18"><path d="M0 7.200 C2.500 8.200 5 8 7 8.400 C8.600 8.800 9.200 9.600 8 10 C5.500 10.400 2.500 10.400 0 10 Z M2 1 C3 1.600 4.200 1.800 5 1.600 L5 2.200 C4 2.400 3 2.200 2 1.800Z M8 15.800 C9.200 15.400 10.200 15.400 11 16 L10.600 17.600 L8.400 17.600Z M0 12 L1.200 13.500 L0 15Z" fill="#2b50c4"/></svg></div>
<div class="t" style="left:1007.0px;top:693.0px;font-size:10.5px;color:#ffffff;letter-spacing:-0.46px;">Sfondo</div>
<svg class="abs" style="left:1161.0px;top:693.5px;" width="10" height="13" viewBox="0 0 10 13"><path d="M2.600 6 V3.800 a2.400 2.400 0 0 1 4.800 0 V6" fill="none" stroke="#f0f0f0" stroke-width="1.300"/><rect x="0.700" y="5.700" width="8.600" height="6.600" rx="0.800" fill="none" stroke="#f0f0f0" stroke-width="1.300"/><rect x="4" y="8" width="2" height="2" fill="#f0f0f0"/></svg>
<div class="abs" style="left:167.5px;top:136.5px;width:367.0px;height:325.5px;background:#2e2e2e;border-radius:4px;"></div>
<div class="abs" style="left:168.5px;top:137.5px;width:365.0px;height:323.5px;background:#535353;border-radius:3px;"></div>
<div class="abs" style="left:168.5px;top:137.5px;width:365.0px;height:13.5px;background:#474747;border-radius:3px 3px 0 0;"></div>
<svg class="abs" style="left:173.0px;top:142.0px;" width="7" height="7" viewBox="0 0 7 7"><path d="M0.800 0.800 L6.200 6.200 M6.200 0.800 L0.800 6.200" stroke="#d0d0d0" stroke-width="1.200"/></svg>
<svg class="abs" style="left:519.5px;top:141.5px;" width="9" height="6" viewBox="0 0 9 6"><path d="M3.600 0.600 L1 3 L3.600 5.400 M7.800 0.600 L5.200 3 L7.800 5.400" fill="none" stroke="#cfcfcf" stroke-width="1.100"/></svg>
<div class="abs" style="left:168.5px;top:151.0px;width:365.0px;height:28.0px;background:#424242;"></div>
<div class="abs" style="left:168.5px;top:151.0px;width:54.5px;height:29.0px;background:#535353;"></div>
<div class="t" style="left:177.5px;top:157.5px;font-size:11.2px;color:#ffffff;letter-spacing:-0.80px;font-weight:bold;">Pennelli</div>
<div class="abs" style="left:520.0px;top:161.5px;width:9.5px;height:7.5px;background:#8a8a8a;"></div>
<div class="t" style="left:174.0px;top:190.3px;font-size:10.5px;color:#dcdcdc;letter-spacing:-0.40px;">Dimensione:</div>
<div class="abs" style="left:275.0px;top:188.5px;width:61.0px;height:16.5px;background:#464646;border:1px solid #636363;"></div>
<div class="t" style="left:279.0px;top:189.6px;font-size:10.5px;color:#f2f2f2;letter-spacing:-0.54px;">123 px</div>
<div class="abs" style="left:178.0px;top:216.0px;width:148.0px;height:3.0px;background:#707070;border-radius:1.5px;"></div>
<svg class="abs" style="left:254.0px;top:218.0px;" width="13" height="13.5" viewBox="0 0 13 13.5"><path d="M6.500 1.200 L11.600 9 Q12.200 12.200 9.200 12.300 H3.800 Q0.800 12.200 1.400 9 Z" fill="#ffffff" stroke="#222222" stroke-width="1.100" stroke-linejoin="round"/></svg>
<svg class="abs" style="left:347.5px;top:198.5px;" width="16" height="18" viewBox="0 0 16 18"><path d="M0 0 h5.500 l1.500 2.500 h9 v15.500 h-16z" fill="#e2e2e2"/><path d="M7.400 10.600 L12.800 3.200" stroke="#3a3a3a" stroke-width="2.200" stroke-linecap="round"/><path d="M7.800 9.400 L9.600 10.800 C9 13.600 6 15 3 14.800 C5.200 13.600 5.200 11 7.800 9.400Z" fill="#3a3a3a"/></svg>
<svg class="abs" style="left:173.3px;top:239.5px;" width="10.5" height="10.5" viewBox="0 0 10.5 10.5"><circle cx="4" cy="4" r="3" fill="none" stroke="#e0e0e0" stroke-width="1.400"/><path d="M6.300 6.300 L9.300 9.300" stroke="#e0e0e0" stroke-width="1.900" stroke-linecap="round"/></svg>
<div class="abs" style="left:188.0px;top:237.0px;width:185.0px;height:16.0px;background:#484848;border:1px solid #6a6a6a;"></div>
<div class="t" style="left:191.5px;top:237.6px;font-size:10px;color:#989898;letter-spacing:-0.08px;font-style:italic;">Cerca pennelli</div>
<div class="abs" style="left:170.0px;top:259.0px;width:203.0px;height:32.0px;background:#4e4e4e;"></div>
<div class="abs" style="left:198.0px;top:259.0px;width:1.0px;height:32.0px;background:#565656;"></div>
<div class="abs" style="left:170px;top:259px;width:28px;height:32px;overflow:hidden"><div class="abs" style="left:-3px;top:-1.500px;width:34px;height:36px;background:radial-gradient(closest-side,#fcfcfc 0%,#ececec 10%,#c8c8c8 26%,#9c9c9c 44%,rgba(130,130,130,0.850) 58%,rgba(104,104,104,0.550) 72%,rgba(90,90,90,0.250) 86%,rgba(78,78,78,0) 100%)"></div></div>
<div class="abs" style="left:168.5px;top:293.0px;width:365.0px;height:1.0px;background:#3e3e3e;"></div>
<div class="abs" style="left:170.0px;top:294.0px;width:349.5px;height:118.5px;background:#454545;"></div>
<svg class="abs" style="left:175.5px;top:304.0px;" width="6" height="10" viewBox="0 0 6 10"><path d="M1 0.800 L4.800 5 L1 9.200" fill="none" stroke="#d4d4d4" stroke-width="1.100"/></svg>
<svg class="abs" style="left:187.0px;top:303.0px;" width="14" height="12" viewBox="0 0 14 12"><path d="M0 1 h4.800 l1.200 1.600 h7.200 v9 h-13.200z" fill="#dcdcdc"/><path d="M0 3.800 h13.200" stroke="#bdbdbd" stroke-width="0.700"/></svg>
<div class="t" style="left:207.5px;top:302.0px;font-size:10.5px;color:#ececec;letter-spacing:-0.33px;">Pennelli generali</div>
<div class="abs" style="left:170.0px;top:323.8px;width:349.5px;height:1.0px;background:#4b4b4b;"></div>
<svg class="abs" style="left:175.5px;top:333.8px;" width="6" height="10" viewBox="0 0 6 10"><path d="M1 0.800 L4.800 5 L1 9.200" fill="none" stroke="#d4d4d4" stroke-width="1.100"/></svg>
<svg class="abs" style="left:187.0px;top:332.8px;" width="14" height="12" viewBox="0 0 14 12"><path d="M0 1 h4.800 l1.200 1.600 h7.200 v9 h-13.200z" fill="#dcdcdc"/><path d="M0 3.800 h13.200" stroke="#bdbdbd" stroke-width="0.700"/></svg>
<div class="t" style="left:207.5px;top:331.8px;font-size:10.5px;color:#ececec;letter-spacing:-0.37px;">Pennelli a secco</div>
<div class="abs" style="left:170.0px;top:353.6px;width:349.5px;height:1.0px;background:#4b4b4b;"></div>
<svg class="abs" style="left:175.5px;top:363.6px;" width="6" height="10" viewBox="0 0 6 10"><path d="M1 0.800 L4.800 5 L1 9.200" fill="none" stroke="#d4d4d4" stroke-width="1.100"/></svg>
<svg class="abs" style="left:187.0px;top:362.6px;" width="14" height="12" viewBox="0 0 14 12"><path d="M0 1 h4.800 l1.200 1.600 h7.200 v9 h-13.200z" fill="#dcdcdc"/><path d="M0 3.800 h13.200" stroke="#bdbdbd" stroke-width="0.700"/></svg>
<div class="t" style="left:207.5px;top:361.6px;font-size:10.5px;color:#ececec;letter-spacing:-0.33px;">Pennelli bagnati</div>
<div class="abs" style="left:170.0px;top:383.4px;width:349.5px;height:1.0px;background:#4b4b4b;"></div>
<svg class="abs" style="left:175.5px;top:393.4px;" width="6" height="10" viewBox="0 0 6 10"><path d="M1 0.800 L4.800 5 L1 9.200" fill="none" stroke="#d4d4d4" stroke-width="1.100"/></svg>
<svg class="abs" style="left:187.0px;top:392.4px;" width="14" height="12" viewBox="0 0 14 12"><path d="M0 1 h4.800 l1.200 1.600 h7.200 v9 h-13.200z" fill="#dcdcdc"/><path d="M0 3.800 h13.200" stroke="#bdbdbd" stroke-width="0.700"/></svg>
<div class="t" style="left:207.5px;top:391.4px;font-size:10.5px;color:#ececec;letter-spacing:-0.18px;">Pennelli per effetti speciali</div>
<div class="abs" style="left:168.5px;top:412.5px;width:365.0px;height:13.0px;background:#505050;"></div>
<div class="abs" style="left:168.5px;top:425.5px;width:365.0px;height:1.0px;background:#3c3c3c;"></div>
<div class="abs" style="left:178.5px;top:434.3px;width:215.0px;height:3.0px;background:#707070;border-radius:1.5px;"></div>
<svg class="abs" style="left:219.0px;top:436.5px;" width="13" height="13.5" viewBox="0 0 13 13.5"><path d="M6.500 1.200 L11.600 9 Q12.200 12.200 9.200 12.300 H3.800 Q0.800 12.200 1.400 9 Z" fill="#ffffff" stroke="#222222" stroke-width="1.100" stroke-linejoin="round"/></svg>
<svg class="abs" style="left:443.8px;top:434.0px;" width="11.4" height="10.6" viewBox="0 0 11.4 10.6"><path d="M0 0 h4.400 l1.200 1.800 h5.800 v8.800 h-11.400z" fill="#dcdcdc"/><path d="M0 3.200 h11.400" stroke="#bcbcbc" stroke-width="0.700"/></svg>
<svg class="abs" style="left:470.2px;top:433.5px;" width="10.8" height="11.8" viewBox="0 0 10.8 11.8"><rect x="0.700" y="0.700" width="9.400" height="10.400" fill="none" stroke="#e0e0e0" stroke-width="1.300"/><path d="M5.400 3.400 V8.400 M2.900 5.900 H7.900" stroke="#e0e0e0" stroke-width="1.400"/></svg>
<svg class="abs" style="left:496.5px;top:433.0px;" width="11" height="13" viewBox="0 0 11 13"><path d="M0.500 2.500 h10 M3.800 2.500 v-1.700 h3.400 v1.700 M1.600 2.500 l0.700 9.800 h6.400 l0.700 -9.800 M4 5 v5 M5.500 5 v5 M7 5 v5" fill="none" stroke="#8a8a8a" stroke-width="1.100"/></svg>
<div class="abs" style="left:168.5px;top:452.5px;width:365.0px;height:1.0px;background:#3a3a3a;"></div>
<div class="abs" style="left:168.5px;top:453.5px;width:365.0px;height:7.5px;background:#4a4a4a;border-radius:0 0 3px 3px;"></div>
<div class="abs" style="left:342.0px;top:455.5px;width:18.0px;height:2.0px;background:#404040;"></div>
<div class="abs" style="left:534.5px;top:136.5px;width:366.5px;height:565.0px;background:#2e2e2e;border-radius:4px 0 0 4px;"></div>
<div class="abs" style="left:535.5px;top:137.5px;width:365.0px;height:563.0px;background:#535353;border-radius:3px 0 0 3px;"></div>
<div class="abs" style="left:535.5px;top:137.5px;width:365.0px;height:13.5px;background:#474747;border-radius:3px 0 0 0;"></div>
<svg class="abs" style="left:539.0px;top:142.0px;" width="7" height="7" viewBox="0 0 7 7"><path d="M0.800 0.800 L6.200 6.200 M6.200 0.800 L0.800 6.200" stroke="#d0d0d0" stroke-width="1.200"/></svg>
<svg class="abs" style="left:885.0px;top:141.5px;" width="9" height="6" viewBox="0 0 9 6"><path d="M3.600 0.600 L1 3 L3.600 5.400 M7.800 0.600 L5.200 3 L7.800 5.400" fill="none" stroke="#cfcfcf" stroke-width="1.100"/></svg>
<div class="abs" style="left:535.5px;top:151.0px;width:365.0px;height:28.0px;background:#424242;"></div>
<div class="abs" style="left:535.5px;top:151.0px;width:120.5px;height:29.0px;background:#535353;"></div>
<div class="t" style="left:543.5px;top:157.5px;font-size:11px;color:#ffffff;letter-spacing:-0.52px;font-weight:bold;">Impostazioni pennello</div>
<div class="abs" style="left:576.0px;top:192.0px;width:51.0px;height:22.0px;background:#444444;border:1px solid #5c5c5c;border-radius:2px;"></div>
<div class="t" style="left:584.5px;top:196.0px;font-size:10.5px;color:#f0f0f0;letter-spacing:-0.42px;">Pennelli</div>
<div class="abs" style="left:540.5px;top:225.0px;width:122.5px;height:254.0px;background:#494949;"></div>
<div class="abs" style="left:541.0px;top:225.0px;width:121.5px;height:19.5px;background:#666666;"></div>
<div class="t" style="left:546.0px;top:228.0px;font-size:10.5px;color:#ececec;letter-spacing:-0.34px;">Forma punta del pennello</div>
<div class="abs" style="left:541.0px;top:245.1px;width:121.5px;height:18.5px;background:#4f4f4f;"></div>
<div class="abs" style="left:551.0px;top:249.8px;width:9.0px;height:9.0px;background:#e8e8e8;border-radius:1.5px;"></div>
<svg class="abs" style="left:552.0px;top:250.8px;" width="7" height="7" viewBox="0 0 7 7"><path d="M1 3.600 L2.900 5.600 L6.200 1.200" fill="none" stroke="#2c2c2c" stroke-width="1.500"/></svg>
<div class="t" style="left:567.0px;top:247.3px;font-size:10.5px;color:#ececec;letter-spacing:-0.36px;">Dinamica forme</div>
<svg class="abs" style="left:646.3px;top:247.0px;" width="10" height="13" viewBox="0 0 10 13"><path d="M7.200 5.600 V3.400 a2.400 2.400 0 0 0 -4.800 0 V4.200" fill="none" stroke="#d8d8d8" stroke-width="1.200"/><rect x="0.800" y="5.300" width="8.400" height="6.600" rx="0.800" fill="none" stroke="#d8d8d8" stroke-width="1.200"/><rect x="4" y="7.600" width="2" height="2" fill="#d8d8d8"/></svg>
<div class="abs" style="left:541.0px;top:264.6px;width:121.5px;height:18.5px;background:#4f4f4f;"></div>
<div class="abs" style="left:551.0px;top:269.3px;width:9.0px;height:9.0px;background:#e8e8e8;border-radius:1.5px;"></div>
<svg class="abs" style="left:552.0px;top:270.3px;" width="7" height="7" viewBox="0 0 7 7"><path d="M1 3.600 L2.900 5.600 L6.200 1.200" fill="none" stroke="#2c2c2c" stroke-width="1.500"/></svg>
<div class="t" style="left:567.0px;top:266.8px;font-size:10.5px;color:#ececec;letter-spacing:-0.31px;">Dispersione</div>
<svg class="abs" style="left:646.3px;top:266.5px;" width="10" height="13" viewBox="0 0 10 13"><path d="M7.200 5.600 V3.400 a2.400 2.400 0 0 0 -4.800 0 V4.200" fill="none" stroke="#d8d8d8" stroke-width="1.200"/><rect x="0.800" y="5.300" width="8.400" height="6.600" rx="0.800" fill="none" stroke="#d8d8d8" stroke-width="1.200"/><rect x="4" y="7.600" width="2" height="2" fill="#d8d8d8"/></svg>
<div class="abs" style="left:541.0px;top:284.1px;width:121.5px;height:18.5px;background:#4f4f4f;"></div>
<div class="abs" style="left:551.0px;top:288.8px;width:9.0px;height:9.0px;background:#4a4a4a;border:1px solid #7a7a7a;border-radius:1.5px;"></div>
<div class="t" style="left:567.0px;top:286.3px;font-size:10.5px;color:#ececec;letter-spacing:-0.23px;">Texture</div>
<svg class="abs" style="left:646.3px;top:286.0px;" width="10" height="13" viewBox="0 0 10 13"><path d="M7.200 5.600 V3.400 a2.400 2.400 0 0 0 -4.800 0 V4.200" fill="none" stroke="#d8d8d8" stroke-width="1.200"/><rect x="0.800" y="5.300" width="8.400" height="6.600" rx="0.800" fill="none" stroke="#d8d8d8" stroke-width="1.200"/><rect x="4" y="7.600" width="2" height="2" fill="#d8d8d8"/></svg>
<div class="abs" style="left:541.0px;top:303.7px;width:121.5px;height:18.5px;background:#4f4f4f;"></div>
<div class="abs" style="left:551.0px;top:308.4px;width:9.0px;height:9.0px;background:#4a4a4a;border:1px solid #7a7a7a;border-radius:1.5px;"></div>
<div class="t" style="left:567.0px;top:305.9px;font-size:10.5px;color:#ececec;letter-spacing:-0.32px;">Pennello doppio</div>
<svg class="abs" style="left:646.3px;top:305.6px;" width="10" height="13" viewBox="0 0 10 13"><path d="M7.200 5.600 V3.400 a2.400 2.400 0 0 0 -4.800 0 V4.200" fill="none" stroke="#d8d8d8" stroke-width="1.200"/><rect x="0.800" y="5.300" width="8.400" height="6.600" rx="0.800" fill="none" stroke="#d8d8d8" stroke-width="1.200"/><rect x="4" y="7.600" width="2" height="2" fill="#d8d8d8"/></svg>
<div class="abs" style="left:541.0px;top:323.2px;width:121.5px;height:18.5px;background:#4f4f4f;"></div>
<div class="abs" style="left:551.0px;top:327.9px;width:9.0px;height:9.0px;background:#4a4a4a;border:1px solid #7a7a7a;border-radius:1.5px;"></div>
<div class="t" style="left:567.0px;top:325.4px;font-size:10.5px;color:#ececec;letter-spacing:-0.28px;">Dinamica colori</div>
<svg class="abs" style="left:646.3px;top:325.1px;" width="10" height="13" viewBox="0 0 10 13"><path d="M7.200 5.600 V3.400 a2.400 2.400 0 0 0 -4.800 0 V4.200" fill="none" stroke="#d8d8d8" stroke-width="1.200"/><rect x="0.800" y="5.300" width="8.400" height="6.600" rx="0.800" fill="none" stroke="#d8d8d8" stroke-width="1.200"/><rect x="4" y="7.600" width="2" height="2" fill="#d8d8d8"/></svg>
<div class="abs" style="left:541.0px;top:342.7px;width:121.5px;height:18.5px;background:#4f4f4f;"></div>
<div class="abs" style="left:551.0px;top:347.4px;width:9.0px;height:9.0px;background:#e8e8e8;border-radius:1.5px;"></div>
<svg class="abs" style="left:552.0px;top:348.4px;" width="7" height="7" viewBox="0 0 7 7"><path d="M1 3.600 L2.900 5.600 L6.200 1.200" fill="none" stroke="#2c2c2c" stroke-width="1.500"/></svg>
<div class="t" style="left:567.0px;top:344.9px;font-size:10.5px;color:#ececec;letter-spacing:-0.30px;">Trasferimento</div>
<svg class="abs" style="left:646.3px;top:344.6px;" width="10" height="13" viewBox="0 0 10 13"><path d="M7.200 5.600 V3.400 a2.400 2.400 0 0 0 -4.800 0 V4.200" fill="none" stroke="#d8d8d8" stroke-width="1.200"/><rect x="0.800" y="5.300" width="8.400" height="6.600" rx="0.800" fill="none" stroke="#d8d8d8" stroke-width="1.200"/><rect x="4" y="7.600" width="2" height="2" fill="#d8d8d8"/></svg>
<div class="abs" style="left:541.0px;top:362.2px;width:121.5px;height:18.5px;background:#4f4f4f;"></div>
<div class="abs" style="left:551.0px;top:366.9px;width:9.0px;height:9.0px;background:#4a4a4a;border:1px solid #7a7a7a;border-radius:1.5px;"></div>
<div class="t" style="left:567.0px;top:364.4px;font-size:10.5px;color:#ececec;letter-spacing:-0.43px;">Posa pennello</div>
<svg class="abs" style="left:646.3px;top:364.1px;" width="10" height="13" viewBox="0 0 10 13"><path d="M7.200 5.600 V3.400 a2.400 2.400 0 0 0 -4.800 0 V4.200" fill="none" stroke="#d8d8d8" stroke-width="1.200"/><rect x="0.800" y="5.300" width="8.400" height="6.600" rx="0.800" fill="none" stroke="#d8d8d8" stroke-width="1.200"/><rect x="4" y="7.600" width="2" height="2" fill="#d8d8d8"/></svg>
<div class="abs" style="left:541.0px;top:381.7px;width:121.5px;height:18.5px;background:#4f4f4f;"></div>
<div class="abs" style="left:551.0px;top:386.4px;width:9.0px;height:9.0px;background:#4a4a4a;border:1px solid #7a7a7a;border-radius:1.5px;"></div>
<div class="t" style="left:567.0px;top:383.9px;font-size:10.5px;color:#ececec;letter-spacing:-0.22px;">Disturbo</div>
<svg class="abs" style="left:646.3px;top:383.6px;" width="10" height="13" viewBox="0 0 10 13"><path d="M7.200 5.600 V3.400 a2.400 2.400 0 0 0 -4.800 0 V4.200" fill="none" stroke="#d8d8d8" stroke-width="1.200"/><rect x="0.800" y="5.300" width="8.400" height="6.600" rx="0.800" fill="none" stroke="#d8d8d8" stroke-width="1.200"/><rect x="4" y="7.600" width="2" height="2" fill="#d8d8d8"/></svg>
<div class="abs" style="left:541.0px;top:401.3px;width:121.5px;height:18.5px;background:#4f4f4f;"></div>
<div class="abs" style="left:551.0px;top:406.0px;width:9.0px;height:9.0px;background:#4a4a4a;border:1px solid #7a7a7a;border-radius:1.5px;"></div>
<div class="t" style="left:567.0px;top:403.5px;font-size:10.5px;color:#ececec;letter-spacing:-0.26px;">Bordi bagnati</div>
<svg class="abs" style="left:646.3px;top:403.2px;" width="10" height="13" viewBox="0 0 10 13"><path d="M7.200 5.600 V3.400 a2.400 2.400 0 0 0 -4.800 0 V4.200" fill="none" stroke="#d8d8d8" stroke-width="1.200"/><rect x="0.800" y="5.300" width="8.400" height="6.600" rx="0.800" fill="none" stroke="#d8d8d8" stroke-width="1.200"/><rect x="4" y="7.600" width="2" height="2" fill="#d8d8d8"/></svg>
<div class="abs" style="left:541.0px;top:420.8px;width:121.5px;height:18.5px;background:#4f4f4f;"></div>
<div class="abs" style="left:551.0px;top:425.5px;width:9.0px;height:9.0px;background:#4a4a4a;border:1px solid #7a7a7a;border-radius:1.5px;"></div>
<div class="t" style="left:567.0px;top:423.0px;font-size:10.5px;color:#ececec;letter-spacing:-0.39px;">Accumulo</div>
<svg class="abs" style="left:646.3px;top:422.7px;" width="10" height="13" viewBox="0 0 10 13"><path d="M7.200 5.600 V3.400 a2.400 2.400 0 0 0 -4.800 0 V4.200" fill="none" stroke="#d8d8d8" stroke-width="1.200"/><rect x="0.800" y="5.300" width="8.400" height="6.600" rx="0.800" fill="none" stroke="#d8d8d8" stroke-width="1.200"/><rect x="4" y="7.600" width="2" height="2" fill="#d8d8d8"/></svg>
<div class="abs" style="left:541.0px;top:440.3px;width:121.5px;height:18.5px;background:#4f4f4f;"></div>
<div class="abs" style="left:551.0px;top:445.0px;width:9.0px;height:9.0px;background:#4a4a4a;border:1px solid #7a7a7a;border-radius:1.5px;"></div>
<div class="t" style="left:567.0px;top:442.5px;font-size:10.5px;color:#ececec;letter-spacing:-0.27px;">Arrotondamento</div>
<svg class="abs" style="left:646.3px;top:442.2px;" width="10" height="13" viewBox="0 0 10 13"><path d="M7.200 5.600 V3.400 a2.400 2.400 0 0 0 -4.800 0 V4.200" fill="none" stroke="#d8d8d8" stroke-width="1.200"/><rect x="0.800" y="5.300" width="8.400" height="6.600" rx="0.800" fill="none" stroke="#d8d8d8" stroke-width="1.200"/><rect x="4" y="7.600" width="2" height="2" fill="#d8d8d8"/></svg>
<div class="abs" style="left:541.0px;top:459.8px;width:121.5px;height:18.5px;background:#4f4f4f;"></div>
<div class="abs" style="left:551.0px;top:464.5px;width:9.0px;height:9.0px;background:#4a4a4a;border:1px solid #7a7a7a;border-radius:1.5px;"></div>
<div class="t" style="left:567.0px;top:462.0px;font-size:10.5px;color:#ececec;letter-spacing:-0.23px;">Proteggi texture</div>
<svg class="abs" style="left:646.3px;top:461.7px;" width="10" height="13" viewBox="0 0 10 13"><path d="M7.200 5.600 V3.400 a2.400 2.400 0 0 0 -4.800 0 V4.200" fill="none" stroke="#d8d8d8" stroke-width="1.200"/><rect x="0.800" y="5.300" width="8.400" height="6.600" rx="0.800" fill="none" stroke="#d8d8d8" stroke-width="1.200"/><rect x="4" y="7.600" width="2" height="2" fill="#d8d8d8"/></svg>
<div class="abs" style="left:672.5px;top:191.5px;width:206.5px;height:112.0px;background:#5c5c5c;"></div>
<div class="abs" style="left:673.4px;top:192.6px;width:28.3px;height:31.6px;background:#4c4c4c;"></div>
<div class="abs" style="left:702.7px;top:192.6px;width:28.3px;height:31.6px;background:#4c4c4c;"></div>
<div class="abs" style="left:731.9px;top:192.6px;width:28.3px;height:31.6px;background:#4c4c4c;"></div>
<div class="abs" style="left:761.2px;top:192.6px;width:28.3px;height:31.6px;background:#4c4c4c;"></div>
<div class="abs" style="left:790.5px;top:192.6px;width:28.3px;height:31.6px;background:#4c4c4c;"></div>
<div class="abs" style="left:819.8px;top:192.6px;width:28.3px;height:31.6px;background:#4c4c4c;"></div>
<div class="abs" style="left:849.0px;top:192.6px;width:28.3px;height:31.6px;background:#4c4c4c;"></div>
<div class="abs" style="left:673.4px;top:225.4px;width:28.3px;height:31.6px;background:#4c4c4c;"></div>
<div class="abs" style="left:702.7px;top:225.4px;width:28.3px;height:31.6px;background:#4c4c4c;"></div>
<div class="abs" style="left:731.9px;top:225.4px;width:28.3px;height:31.6px;background:#4c4c4c;"></div>
<div class="abs" style="left:761.2px;top:225.4px;width:28.3px;height:31.6px;background:#4c4c4c;"></div>
<div class="abs" style="left:790.5px;top:225.4px;width:28.3px;height:31.6px;background:#4c4c4c;"></div>
<div class="abs" style="left:819.8px;top:225.4px;width:28.3px;height:31.6px;background:#4c4c4c;"></div>
<div class="abs" style="left:849.0px;top:225.4px;width:28.3px;height:31.6px;background:#4c4c4c;"></div>
<div class="abs" style="left:673.4px;top:258.2px;width:28.3px;height:31.6px;background:#4c4c4c;"></div>
<div class="abs" style="left:702.7px;top:258.2px;width:28.3px;height:31.6px;background:#4c4c4c;"></div>
<div class="abs" style="left:731.9px;top:258.2px;width:28.3px;height:31.6px;background:#4c4c4c;"></div>
<div class="abs" style="left:761.2px;top:258.2px;width:28.3px;height:31.6px;background:#4c4c4c;"></div>
<div class="abs" style="left:790.5px;top:258.2px;width:28.3px;height:31.6px;background:#4c4c4c;"></div>
<div class="abs" style="left:819.8px;top:258.2px;width:28.3px;height:31.6px;background:#4c4c4c;"></div>
<div class="abs" style="left:849.0px;top:258.2px;width:28.3px;height:31.6px;background:#4c4c4c;"></div>
<div class="abs" style="left:673.4px;top:291.0px;width:28.3px;height:12.5px;background:#4c4c4c;"></div>
<div class="abs" style="left:702.7px;top:291.0px;width:28.3px;height:12.5px;background:#4c4c4c;"></div>
<div class="abs" style="left:731.9px;top:291.0px;width:28.3px;height:12.5px;background:#4c4c4c;"></div>
<div class="abs" style="left:761.2px;top:291.0px;width:28.3px;height:12.5px;background:#4c4c4c;"></div>
<div class="abs" style="left:790.5px;top:291.0px;width:28.3px;height:12.5px;background:#4c4c4c;"></div>
<div class="abs" style="left:819.8px;top:291.0px;width:28.3px;height:12.5px;background:#4c4c4c;"></div>
<div class="abs" style="left:849.0px;top:291.0px;width:28.3px;height:12.5px;background:#4c4c4c;"></div>
<svg class="abs" style="left:0;top:0" width="1200" height="304" viewBox="0 0 1200 304"><defs><radialGradient id="soft"><stop offset="0" stop-color="#f6f6f6"/><stop offset="0.350" stop-color="#c0c0c0"/><stop offset="0.700" stop-color="#7c7c7c" stop-opacity="0.700"/><stop offset="1" stop-color="#4c4c4c" stop-opacity="0"/></radialGradient><radialGradient id="soft2"><stop offset="0" stop-color="#ffffff"/><stop offset="0.600" stop-color="#f0f0f0"/><stop offset="1" stop-color="#4c4c4c" stop-opacity="0"/></radialGradient><clipPath id="gclip"><rect x="672" y="192" width="208" height="111.500"/></clipPath></defs><g clip-path="url(#gclip)"><circle cx="687.535" cy="202.0" r="8" fill="url(#soft)"/><circle cx="716.805" cy="202.0" r="7.500" fill="#ffffff"/><circle cx="746.0749999999999" cy="202.0" r="1.300" fill="#ffffff"/><ellipse cx="775.345" cy="202.0" rx="1.600" ry="2.200" fill="#ffffff"/><circle cx="803.9" cy="203.3" r="1.0" fill="#f0f0f0"/><circle cx="807.7" cy="203.4" r="0.7" fill="#f0f0f0"/><circle cx="807.7" cy="203.1" r="0.4" fill="#f0f0f0"/><circle cx="803.7" cy="202.4" r="0.5" fill="#f0f0f0"/><circle cx="800.6" cy="203.8" r="0.5" fill="#f0f0f0"/><circle cx="805.2" cy="205.4" r="1.3" fill="#f0f0f0"/><circle cx="802.1" cy="200.8" r="1.3" fill="#f0f0f0"/><circle cx="809.0" cy="203.2" r="0.7" fill="#f0f0f0"/><circle cx="805.5" cy="203.0" r="0.7" fill="#f0f0f0"/><circle cx="805.3" cy="200.5" r="0.9" fill="#f0f0f0"/><circle cx="802.8" cy="200.1" r="0.9" fill="#f0f0f0"/><circle cx="805.5" cy="202.3" r="0.6" fill="#f0f0f0"/><circle cx="803.3" cy="199.6" r="0.7" fill="#f0f0f0"/><circle cx="801.9" cy="200.6" r="0.7" fill="#f0f0f0"/><circle cx="805.7" cy="198.5" r="0.6" fill="#f0f0f0"/><circle cx="801.6" cy="200.6" r="1.2" fill="#f0f0f0"/><circle cx="804.3" cy="199.9" r="1.3" fill="#f0f0f0"/><circle cx="806.8" cy="203.8" r="1.1" fill="#f0f0f0"/><circle cx="806.5" cy="204.4" r="0.4" fill="#f0f0f0"/><circle cx="802.5" cy="198.7" r="0.9" fill="#f0f0f0"/><circle cx="806.4" cy="200.4" r="1.0" fill="#f0f0f0"/><circle cx="801.6" cy="200.2" r="0.8" fill="#f0f0f0"/><rect x="837.6" y="204.9" width="1.7" height="0.900" fill="#b4b4b4"/><rect x="835.2" y="196.1" width="2.2" height="0.900" fill="#b4b4b4"/><rect x="834.9" y="205.4" width="2.4" height="0.900" fill="#b4b4b4"/><rect x="829.9" y="199.4" width="2.1" height="0.900" fill="#b4b4b4"/><rect x="826.2" y="200.1" width="1.1" height="0.900" fill="#b4b4b4"/><rect x="827.5" y="196.1" width="2.3" height="0.900" fill="#b4b4b4"/><rect x="827.7" y="198.0" width="1.6" height="0.900" fill="#b4b4b4"/><rect x="838.1" y="196.3" width="1.7" height="0.900" fill="#b4b4b4"/><rect x="833.6" y="204.3" width="2.4" height="0.900" fill="#b4b4b4"/><rect x="838.0" y="198.3" width="1.6" height="0.900" fill="#b4b4b4"/><rect x="830.9" y="204.3" width="2.7" height="0.900" fill="#b4b4b4"/><rect x="828.0" y="197.3" width="1.3" height="0.900" fill="#b4b4b4"/><rect x="829.2" y="200.3" width="2.0" height="0.900" fill="#b4b4b4"/><rect x="829.6" y="195.5" width="1.6" height="0.900" fill="#b4b4b4"/><rect x="831.1" y="201.2" width="2.7" height="0.900" fill="#b4b4b4"/><rect x="835.6" y="200.7" width="2.0" height="0.900" fill="#b4b4b4"/><rect x="835.4" y="196.0" width="2.6" height="0.900" fill="#b4b4b4"/><rect x="836.8" y="204.2" width="2.4" height="0.900" fill="#b4b4b4"/><rect x="831.4" y="199.5" width="1.0" height="0.900" fill="#b4b4b4"/><rect x="834.8" y="196.1" width="0.9" height="0.900" fill="#b4b4b4"/><rect x="828.8" y="197.1" width="1.5" height="0.900" fill="#b4b4b4"/><rect x="826.6" y="195.5" width="1.1" height="0.900" fill="#b4b4b4"/><rect x="827.3" y="199.1" width="0.9" height="0.900" fill="#b4b4b4"/><rect x="838.1" y="201.6" width="1.1" height="0.900" fill="#b4b4b4"/><rect x="829.4" y="199.0" width="1.5" height="0.900" fill="#b4b4b4"/><rect x="827.6" y="204.0" width="2.8" height="0.900" fill="#b4b4b4"/><rect x="832.4" y="200.3" width="1.0" height="0.900" fill="#b4b4b4"/><rect x="827.3" y="198.9" width="1.3" height="0.900" fill="#b4b4b4"/><rect x="837.5" y="197.1" width="0.8" height="0.900" fill="#b4b4b4"/><rect x="839.2" y="200.8" width="1.1" height="0.900" fill="#b4b4b4"/><rect x="833.5" y="195.8" width="1.9" height="0.900" fill="#b4b4b4"/><rect x="839.6" y="204.1" width="2.2" height="0.900" fill="#b4b4b4"/><rect x="829.5" y="199.2" width="1.1" height="0.900" fill="#b4b4b4"/><rect x="836.7" y="200.8" width="2.4" height="0.900" fill="#b4b4b4"/><rect x="830.5" y="197.7" width="2.4" height="0.900" fill="#b4b4b4"/><rect x="839.7" y="204.0" width="2.4" height="0.900" fill="#b4b4b4"/><rect x="837.3" y="202.9" width="1.3" height="0.900" fill="#b4b4b4"/><rect x="833.1" y="199.1" width="0.9" height="0.900" fill="#b4b4b4"/><rect x="826.3" y="198.3" width="1.3" height="0.900" fill="#b4b4b4"/><rect x="835.6" y="205.1" width="1.7" height="0.900" fill="#b4b4b4"/><rect x="839.0" y="205.4" width="2.7" height="0.900" fill="#b4b4b4"/><rect x="831.0" y="197.7" width="1.3" height="0.900" fill="#b4b4b4"/><rect x="828.6" y="197.5" width="2.0" height="0.900" fill="#b4b4b4"/><rect x="838.5" y="203.9" width="1.8" height="0.900" fill="#b4b4b4"/><rect x="835.0" y="203.5" width="1.0" height="0.900" fill="#b4b4b4"/><rect x="835.1" y="204.6" width="2.4" height="0.900" fill="#b4b4b4"/><rect x="836.4" y="200.3" width="1.2" height="0.900" fill="#b4b4b4"/><rect x="836.9" y="198.8" width="2.4" height="0.900" fill="#b4b4b4"/><rect x="839.5" y="199.5" width="1.6" height="0.900" fill="#b4b4b4"/><rect x="839.1" y="202.7" width="1.1" height="0.900" fill="#b4b4b4"/><rect x="827.7" y="197.0" width="2.6" height="0.900" fill="#b4b4b4"/><rect x="837.2" y="197.0" width="2.5" height="0.900" fill="#b4b4b4"/><rect x="839.6" y="202.1" width="1.5" height="0.900" fill="#b4b4b4"/><rect x="833.6" y="196.8" width="0.8" height="0.900" fill="#b4b4b4"/><rect x="839.5" y="202.0" width="1.9" height="0.900" fill="#b4b4b4"/><rect x="839.0" y="199.8" width="2.5" height="0.900" fill="#b4b4b4"/><rect x="837.5" y="197.6" width="1.3" height="0.900" fill="#b4b4b4"/><rect x="830.0" y="197.9" width="2.0" height="0.900" fill="#b4b4b4"/><rect x="829.5" y="199.7" width="1.1" height="0.900" fill="#b4b4b4"/><rect x="838.6" y="199.0" width="1.7" height="0.900" fill="#b4b4b4"/><rect x="834.1" y="204.5" width="1.6" height="0.900" fill="#b4b4b4"/><rect x="838.7" y="200.5" width="1.9" height="0.900" fill="#b4b4b4"/><rect x="833.2" y="195.7" width="1.7" height="0.900" fill="#b4b4b4"/><rect x="828.4" y="195.5" width="2.4" height="0.900" fill="#b4b4b4"/><rect x="828.3" y="200.2" width="2.3" height="0.900" fill="#b4b4b4"/><rect x="833.7" y="198.8" width="1.8" height="0.900" fill="#b4b4b4"/><rect x="833.7" y="203.3" width="1.0" height="0.900" fill="#b4b4b4"/><rect x="833.7" y="198.0" width="1.4" height="0.900" fill="#b4b4b4"/><rect x="836.7" y="200.6" width="1.9" height="0.900" fill="#b4b4b4"/><rect x="836.5" y="204.6" width="1.7" height="0.900" fill="#b4b4b4"/><rect x="834.5" y="200.6" width="1.8" height="0.900" fill="#b4b4b4"/><rect x="835.6" y="200.0" width="1.9" height="0.900" fill="#b4b4b4"/><rect x="832.6" y="204.9" width="2.2" height="0.900" fill="#b4b4b4"/><rect x="838.2" y="204.9" width="1.3" height="0.900" fill="#b4b4b4"/><rect x="833.7" y="204.9" width="2.5" height="0.900" fill="#b4b4b4"/><rect x="827.8" y="196.7" width="1.7" height="0.900" fill="#b4b4b4"/><rect x="826.9" y="197.9" width="0.9" height="0.900" fill="#b4b4b4"/><rect x="835.3" y="203.3" width="2.6" height="0.900" fill="#b4b4b4"/><rect x="828.0" y="202.7" width="2.1" height="0.900" fill="#b4b4b4"/><rect x="827.9" y="204.3" width="2.7" height="0.900" fill="#b4b4b4"/><rect x="829.0" y="205.0" width="1.6" height="0.900" fill="#b4b4b4"/><rect x="832.7" y="205.4" width="2.5" height="0.900" fill="#b4b4b4"/><rect x="828.1" y="199.8" width="1.8" height="0.900" fill="#b4b4b4"/><rect x="830.6" y="197.5" width="1.4" height="0.900" fill="#b4b4b4"/><rect x="836.0" y="195.7" width="1.9" height="0.900" fill="#b4b4b4"/><rect x="832.1" y="195.7" width="1.5" height="0.900" fill="#b4b4b4"/><rect x="834.6" y="200.6" width="0.9" height="0.900" fill="#b4b4b4"/><rect x="839.7" y="203.4" width="2.7" height="0.900" fill="#b4b4b4"/><rect x="827.4" y="198.2" width="0.9" height="0.900" fill="#b4b4b4"/><rect x="836.8" y="198.2" width="1.1" height="0.900" fill="#b4b4b4"/><circle cx="863.155" cy="202.0" r="7.2" fill="#8c8c8c"/><circle cx="856.5" cy="205.6" r="1.1" fill="#ececec"/><circle cx="863.0" cy="204.6" r="1.2" fill="#ececec"/><circle cx="857.3" cy="199.2" r="0.5" fill="#ececec"/><circle cx="869.1" cy="204.3" r="0.8" fill="#ececec"/><circle cx="870.1" cy="205.4" r="1.0" fill="#ececec"/><circle cx="863.7" cy="200.3" r="1.2" fill="#ececec"/><circle cx="869.8" cy="205.0" r="0.8" fill="#ececec"/><circle cx="860.2" cy="206.8" r="1.2" fill="#ececec"/><circle cx="862.9" cy="204.3" r="0.9" fill="#ececec"/><circle cx="863.3" cy="204.1" r="0.5" fill="#ececec"/><circle cx="866.1" cy="203.0" r="0.7" fill="#ececec"/><circle cx="860.9" cy="208.4" r="0.7" fill="#ececec"/><circle cx="860.3" cy="202.0" r="0.7" fill="#ececec"/><circle cx="866.6" cy="202.4" r="0.4" fill="#ececec"/><circle cx="862.6" cy="196.4" r="0.6" fill="#ececec"/><circle cx="855.6" cy="203.2" r="0.5" fill="#ececec"/><circle cx="865.2" cy="197.6" r="0.8" fill="#ececec"/><circle cx="865.5" cy="198.1" r="0.9" fill="#ececec"/><circle cx="860.1" cy="194.7" r="0.7" fill="#ececec"/><circle cx="866.4" cy="196.4" r="1.0" fill="#ececec"/><circle cx="859.7" cy="204.4" r="0.4" fill="#ececec"/><circle cx="864.3" cy="203.2" r="1.1" fill="#ececec"/><circle cx="863.1" cy="204.7" r="0.5" fill="#ececec"/><circle cx="867.1" cy="195.8" r="1.0" fill="#ececec"/><circle cx="862.5" cy="205.3" r="0.7" fill="#ececec"/><circle cx="860.6" cy="202.7" r="0.8" fill="#ececec"/><circle cx="862.5" cy="209.8" r="1.3" fill="#ececec"/><circle cx="859.9" cy="201.0" r="1.3" fill="#ececec"/><circle cx="861.6" cy="206.0" r="0.4" fill="#ececec"/><circle cx="859.4" cy="205.5" r="0.9" fill="#ececec"/><circle cx="864.8" cy="207.1" r="0.4" fill="#ececec"/><circle cx="863.0" cy="203.9" r="0.8" fill="#ececec"/><circle cx="863.9" cy="202.2" r="0.7" fill="#ececec"/><circle cx="863.8" cy="207.8" r="0.9" fill="#ececec"/><circle cx="863.2" cy="195.8" r="1.0" fill="#ececec"/><circle cx="866.4" cy="198.9" r="0.7" fill="#ececec"/><circle cx="865.7" cy="201.8" r="1.1" fill="#ececec"/><circle cx="862.4" cy="201.0" r="1.2" fill="#ececec"/><circle cx="867.9" cy="198.2" r="1.1" fill="#ececec"/><circle cx="864.1" cy="199.7" r="0.9" fill="#ececec"/><circle cx="856.0" cy="201.8" r="1.1" fill="#ececec"/><circle cx="865.8" cy="196.9" r="1.2" fill="#ececec"/><circle cx="860.5" cy="196.1" r="0.6" fill="#ececec"/><circle cx="865.5" cy="202.5" r="0.7" fill="#ececec"/><circle cx="868.8" cy="206.4" r="0.9" fill="#ececec"/><circle cx="859.0" cy="197.7" r="1.0" fill="#ececec"/><circle cx="862.9" cy="202.0" r="1.1" fill="#ececec"/><circle cx="863.1" cy="196.7" r="0.9" fill="#ececec"/><circle cx="862.3" cy="200.7" r="1.1" fill="#ececec"/><circle cx="863.1" cy="203.7" r="0.6" fill="#ececec"/><circle cx="862.8" cy="198.9" r="1.1" fill="#ececec"/><circle cx="868.3" cy="201.2" r="0.7" fill="#ececec"/><circle cx="856.8" cy="202.8" r="1.1" fill="#ececec"/><circle cx="858.6" cy="197.9" r="0.5" fill="#ececec"/><circle cx="865.3" cy="204.8" r="1.1" fill="#ececec"/><circle cx="861.2" cy="207.4" r="0.4" fill="#ececec"/><circle cx="866.5" cy="203.4" r="1.0" fill="#ececec"/><circle cx="860.9" cy="196.1" r="0.7" fill="#ececec"/><circle cx="858.1" cy="201.5" r="0.8" fill="#ececec"/><circle cx="868.7" cy="207.1" r="0.6" fill="#ececec"/><circle cx="870.8" cy="200.9" r="0.4" fill="#ececec"/><circle cx="856.3" cy="203.8" r="1.3" fill="#ececec"/><circle cx="859.7" cy="203.1" r="0.6" fill="#ececec"/><circle cx="866.1" cy="200.9" r="0.9" fill="#ececec"/><circle cx="866.6" cy="206.2" r="1.3" fill="#ececec"/><circle cx="867.9" cy="207.3" r="0.9" fill="#ececec"/><circle cx="868.1" cy="197.8" r="0.6" fill="#ececec"/><circle cx="867.3" cy="198.9" r="0.4" fill="#ececec"/><circle cx="868.4" cy="202.1" r="0.8" fill="#ececec"/><circle cx="862.4" cy="204.3" r="0.7" fill="#ececec"/><circle cx="860.2" cy="208.6" r="0.4" fill="#ececec"/><circle cx="863.2" cy="194.8" r="0.5" fill="#ececec"/><circle cx="869.0" cy="199.1" r="1.2" fill="#ececec"/><circle cx="862.1" cy="206.3" r="0.8" fill="#ececec"/><circle cx="869.0" cy="202.0" r="0.7" fill="#ececec"/><circle cx="859.8" cy="203.6" r="0.4" fill="#ececec"/><circle cx="868.9" cy="206.3" r="0.7" fill="#ececec"/><circle cx="866.4" cy="200.6" r="0.6" fill="#ececec"/><circle cx="860.2" cy="201.8" r="0.7" fill="#ececec"/><circle cx="870.3" cy="200.0" r="1.1" fill="#ececec"/><circle cx="858.0" cy="196.4" r="1.2" fill="#ececec"/><circle cx="856.9" cy="200.0" r="0.4" fill="#ececec"/><circle cx="862.6" cy="197.1" r="1.1" fill="#ececec"/><circle cx="860.8" cy="199.0" r="0.4" fill="#ececec"/><circle cx="865.2" cy="201.0" r="0.8" fill="#ececec"/><circle cx="861.0" cy="205.2" r="1.1" fill="#ececec"/><circle cx="866.7" cy="201.5" r="1.0" fill="#ececec"/><circle cx="861.4" cy="207.3" r="0.8" fill="#ececec"/><circle cx="864.5" cy="204.3" r="0.6" fill="#ececec"/><circle cx="867.5" cy="199.1" r="0.6" fill="#ececec"/><ellipse cx="687.535" cy="234.79999999999998" rx="10.500" ry="7.500" fill="url(#soft2)"/><ellipse cx="716.805" cy="234.79999999999998" rx="5.500" ry="6.500" fill="#f4f4f4"/><circle cx="722.2" cy="230.9" r="0.8" fill="#f4f4f4"/><circle cx="718.4" cy="236.8" r="0.5" fill="#f4f4f4"/><circle cx="716.0" cy="236.2" r="0.6" fill="#f4f4f4"/><circle cx="716.6" cy="239.8" r="1.2" fill="#f4f4f4"/><circle cx="716.8" cy="230.7" r="0.8" fill="#f4f4f4"/><circle cx="713.2" cy="234.2" r="0.7" fill="#f4f4f4"/><circle cx="719.6" cy="236.0" r="1.3" fill="#f4f4f4"/><circle cx="719.8" cy="238.1" r="1.0" fill="#f4f4f4"/><circle cx="718.5" cy="232.7" r="0.6" fill="#f4f4f4"/><circle cx="716.8" cy="238.8" r="0.8" fill="#f4f4f4"/><circle cx="722.5" cy="233.0" r="1.2" fill="#f4f4f4"/><circle cx="717.6" cy="234.9" r="1.0" fill="#f4f4f4"/><circle cx="720.1" cy="232.1" r="0.9" fill="#f4f4f4"/><circle cx="720.5" cy="234.8" r="1.2" fill="#f4f4f4"/><ellipse cx="746.0749999999999" cy="234.79999999999998" rx="5" ry="6" fill="#d8d8d8"/><circle cx="748.6" cy="229.1" r="1.3" fill="#e8e8e8"/><circle cx="746.1" cy="236.7" r="0.5" fill="#e8e8e8"/><circle cx="741.4" cy="234.0" r="1.2" fill="#e8e8e8"/><circle cx="745.3" cy="229.5" r="1.1" fill="#e8e8e8"/><circle cx="742.0" cy="236.1" r="0.4" fill="#e8e8e8"/><circle cx="746.6" cy="231.9" r="1.2" fill="#e8e8e8"/><circle cx="744.3" cy="232.1" r="0.5" fill="#e8e8e8"/><circle cx="746.0" cy="240.1" r="1.0" fill="#e8e8e8"/><circle cx="747.0" cy="235.7" r="0.9" fill="#e8e8e8"/><circle cx="743.1" cy="232.8" r="0.6" fill="#e8e8e8"/><circle cx="745.8" cy="234.5" r="0.7" fill="#e8e8e8"/><circle cx="740.4" cy="236.5" r="1.0" fill="#e8e8e8"/><circle cx="748.9" cy="231.8" r="0.6" fill="#e8e8e8"/><circle cx="746.2" cy="241.6" r="1.0" fill="#e8e8e8"/><circle cx="745.9" cy="235.5" r="0.8" fill="#e8e8e8"/><circle cx="744.4" cy="231.1" r="0.6" fill="#e8e8e8"/><circle cx="743.2" cy="229.0" r="0.6" fill="#e8e8e8"/><circle cx="749.1" cy="235.6" r="0.8" fill="#e8e8e8"/><circle cx="745.1" cy="232.4" r="1.1" fill="#e8e8e8"/><circle cx="745.8" cy="230.2" r="0.6" fill="#e8e8e8"/><circle cx="749.0" cy="234.1" r="1.1" fill="#e8e8e8"/><circle cx="746.4" cy="237.6" r="1.1" fill="#e8e8e8"/><circle cx="770.5" cy="236.4" r="0.9" fill="#e4e4e4"/><circle cx="769.9" cy="231.3" r="0.9" fill="#e4e4e4"/><circle cx="777.5" cy="238.8" r="0.6" fill="#e4e4e4"/><circle cx="774.0" cy="232.1" r="1.4" fill="#e4e4e4"/><circle cx="769.3" cy="230.2" r="0.6" fill="#e4e4e4"/><circle cx="772.4" cy="236.9" r="1.3" fill="#e4e4e4"/><circle cx="778.8" cy="239.3" r="1.3" fill="#e4e4e4"/><circle cx="772.8" cy="231.7" r="1.3" fill="#e4e4e4"/><circle cx="781.0" cy="233.5" r="1.1" fill="#e4e4e4"/><circle cx="773.3" cy="233.2" r="0.8" fill="#e4e4e4"/><circle cx="770.0" cy="230.0" r="0.8" fill="#e4e4e4"/><circle cx="771.5" cy="236.9" r="0.6" fill="#e4e4e4"/><circle cx="784.6" cy="236.3" r="0.8" fill="#e4e4e4"/><circle cx="780.9" cy="238.6" r="0.9" fill="#e4e4e4"/><circle cx="766.8" cy="231.9" r="0.8" fill="#e4e4e4"/><circle cx="783.8" cy="235.8" r="0.8" fill="#e4e4e4"/><circle cx="783.7" cy="234.8" r="0.9" fill="#e4e4e4"/><circle cx="780.8" cy="238.2" r="0.5" fill="#e4e4e4"/><circle cx="767.2" cy="229.8" r="1.3" fill="#e4e4e4"/><circle cx="770.2" cy="234.8" r="1.3" fill="#e4e4e4"/><circle cx="772.8" cy="232.3" r="1.4" fill="#e4e4e4"/><circle cx="778.1" cy="233.9" r="1.1" fill="#e4e4e4"/><circle cx="772.3" cy="232.2" r="0.5" fill="#e4e4e4"/><circle cx="779.4" cy="238.9" r="1.1" fill="#e4e4e4"/><circle cx="784.5" cy="235.2" r="0.7" fill="#e4e4e4"/><circle cx="773.8" cy="238.1" r="1.4" fill="#e4e4e4"/><circle cx="773.7" cy="232.4" r="0.9" fill="#e4e4e4"/><circle cx="774.2" cy="238.0" r="0.7" fill="#e4e4e4"/><circle cx="780.7" cy="238.0" r="1.2" fill="#e4e4e4"/><circle cx="780.3" cy="237.1" r="0.8" fill="#e4e4e4"/><circle cx="772.2" cy="232.8" r="1.2" fill="#e4e4e4"/><circle cx="767.8" cy="230.7" r="1.2" fill="#e4e4e4"/><circle cx="771.4" cy="230.6" r="0.5" fill="#e4e4e4"/><circle cx="776.8" cy="233.9" r="1.4" fill="#e4e4e4"/><circle cx="781.8" cy="239.7" r="0.7" fill="#e4e4e4"/><circle cx="768.1" cy="230.2" r="0.9" fill="#e4e4e4"/><circle cx="779.4" cy="235.8" r="0.7" fill="#e4e4e4"/><circle cx="773.5" cy="235.1" r="1.1" fill="#e4e4e4"/><circle cx="779.4" cy="238.4" r="1.1" fill="#e4e4e4"/><circle cx="767.6" cy="234.3" r="0.8" fill="#e4e4e4"/><circle cx="776.9" cy="234.3" r="1.2" fill="#e4e4e4"/><circle cx="770.1" cy="231.5" r="0.7" fill="#e4e4e4"/><circle cx="768.1" cy="234.8" r="1.0" fill="#e4e4e4"/><circle cx="772.3" cy="233.0" r="1.4" fill="#e4e4e4"/><circle cx="776.1" cy="232.8" r="1.2" fill="#e4e4e4"/><circle cx="777.2" cy="239.0" r="0.6" fill="#e4e4e4"/><circle cx="774.1" cy="237.0" r="1.3" fill="#e4e4e4"/><circle cx="784.0" cy="235.0" r="0.8" fill="#e4e4e4"/><circle cx="768.6" cy="230.8" r="1.4" fill="#e4e4e4"/><circle cx="775.9" cy="238.4" r="0.8" fill="#e4e4e4"/><circle cx="782.4" cy="236.8" r="0.7" fill="#e4e4e4"/><circle cx="779.8" cy="239.2" r="0.6" fill="#e4e4e4"/><circle cx="776.9" cy="236.2" r="0.7" fill="#e4e4e4"/><circle cx="773.6" cy="231.5" r="0.7" fill="#e4e4e4"/><circle cx="770.5" cy="233.9" r="1.1" fill="#e4e4e4"/><circle cx="770.6" cy="230.1" r="0.8" fill="#e4e4e4"/><circle cx="779.4" cy="233.8" r="0.8" fill="#e4e4e4"/><circle cx="769.1" cy="234.7" r="1.0" fill="#e4e4e4"/><circle cx="767.7" cy="230.1" r="0.9" fill="#e4e4e4"/><circle cx="776.0" cy="236.1" r="0.6" fill="#e4e4e4"/><circle cx="768.6" cy="233.8" r="0.9" fill="#e4e4e4"/><circle cx="771.6" cy="232.3" r="1.4" fill="#e4e4e4"/><circle cx="771.6" cy="234.1" r="0.8" fill="#e4e4e4"/><circle cx="772.9" cy="236.9" r="1.4" fill="#e4e4e4"/><circle cx="773.4" cy="231.9" r="1.2" fill="#e4e4e4"/><circle cx="770.6" cy="230.1" r="1.3" fill="#e4e4e4"/><circle cx="773.2" cy="236.6" r="0.9" fill="#e4e4e4"/><circle cx="782.7" cy="237.0" r="0.6" fill="#e4e4e4"/><circle cx="766.0" cy="232.0" r="1.1" fill="#e4e4e4"/><circle cx="783.8" cy="235.2" r="1.1" fill="#e4e4e4"/><circle cx="772.9" cy="234.0" r="0.6" fill="#e4e4e4"/><circle cx="771.2" cy="233.6" r="1.3" fill="#e4e4e4"/><circle cx="767.9" cy="232.3" r="1.2" fill="#e4e4e4"/><circle cx="784.7" cy="236.2" r="0.6" fill="#e4e4e4"/><circle cx="783.0" cy="239.9" r="0.9" fill="#e4e4e4"/><circle cx="766.2" cy="234.1" r="0.8" fill="#e4e4e4"/><circle cx="782.8" cy="237.9" r="1.2" fill="#e4e4e4"/><circle cx="768.4" cy="234.3" r="0.7" fill="#e4e4e4"/><circle cx="772.7" cy="236.6" r="1.2" fill="#e4e4e4"/><circle cx="769.8" cy="231.2" r="0.9" fill="#e4e4e4"/><circle cx="776.0" cy="234.0" r="0.6" fill="#e4e4e4"/><circle cx="770.1" cy="234.6" r="1.3" fill="#e4e4e4"/><circle cx="766.5" cy="232.3" r="1.2" fill="#e4e4e4"/><circle cx="766.0" cy="233.6" r="0.6" fill="#e4e4e4"/><circle cx="777.1" cy="235.8" r="1.1" fill="#e4e4e4"/><circle cx="771.8" cy="233.1" r="1.0" fill="#e4e4e4"/><circle cx="773.6" cy="235.5" r="0.9" fill="#e4e4e4"/><circle cx="775.3" cy="231.0" r="1.1" fill="#e4e4e4"/><circle cx="775.8" cy="232.7" r="1.2" fill="#e4e4e4"/><circle cx="780.8" cy="236.3" r="0.7" fill="#e4e4e4"/><circle cx="775.8" cy="231.7" r="0.6" fill="#e4e4e4"/><circle cx="775.0" cy="231.4" r="0.9" fill="#e4e4e4"/><circle cx="776.7" cy="231.4" r="1.1" fill="#e4e4e4"/><circle cx="767.0" cy="233.4" r="1.2" fill="#e4e4e4"/><circle cx="776.7" cy="231.5" r="1.0" fill="#e4e4e4"/><circle cx="772.0" cy="237.1" r="0.6" fill="#e4e4e4"/><circle cx="781.3" cy="239.7" r="1.2" fill="#e4e4e4"/><circle cx="781.9" cy="235.0" r="1.4" fill="#e4e4e4"/><circle cx="774.1" cy="238.2" r="1.3" fill="#e4e4e4"/><circle cx="768.5" cy="234.3" r="1.3" fill="#e4e4e4"/><circle cx="767.3" cy="231.4" r="1.2" fill="#e4e4e4"/><circle cx="768.1" cy="234.9" r="0.7" fill="#e4e4e4"/><circle cx="782.0" cy="234.7" r="1.0" fill="#e4e4e4"/><circle cx="783.8" cy="235.9" r="0.7" fill="#e4e4e4"/><circle cx="775.9" cy="233.5" r="0.5" fill="#e4e4e4"/><circle cx="769.9" cy="230.9" r="1.3" fill="#e4e4e4"/><circle cx="777.9" cy="238.5" r="0.7" fill="#e4e4e4"/><circle cx="781.5" cy="234.3" r="1.0" fill="#e4e4e4"/><circle cx="778.2" cy="234.7" r="1.3" fill="#e4e4e4"/><circle cx="776.2" cy="235.7" r="1.3" fill="#e4e4e4"/><circle cx="796.3" cy="234.9" r="1.1" fill="#e4e4e4"/><circle cx="801.9" cy="236.2" r="0.7" fill="#e4e4e4"/><circle cx="813.8" cy="238.2" r="0.8" fill="#e4e4e4"/><circle cx="809.8" cy="236.1" r="0.7" fill="#e4e4e4"/><circle cx="810.1" cy="233.5" r="1.2" fill="#e4e4e4"/><circle cx="799.7" cy="234.1" r="1.4" fill="#e4e4e4"/><circle cx="805.9" cy="236.5" r="0.8" fill="#e4e4e4"/><circle cx="795.8" cy="229.6" r="0.6" fill="#e4e4e4"/><circle cx="807.0" cy="235.0" r="1.0" fill="#e4e4e4"/><circle cx="812.8" cy="235.3" r="0.7" fill="#e4e4e4"/><circle cx="808.6" cy="232.6" r="0.5" fill="#e4e4e4"/><circle cx="802.7" cy="231.3" r="0.8" fill="#e4e4e4"/><circle cx="799.2" cy="233.6" r="1.0" fill="#e4e4e4"/><circle cx="798.8" cy="233.7" r="0.9" fill="#e4e4e4"/><circle cx="796.9" cy="234.9" r="0.7" fill="#e4e4e4"/><circle cx="798.7" cy="230.4" r="1.1" fill="#e4e4e4"/><circle cx="811.2" cy="238.6" r="0.9" fill="#e4e4e4"/><circle cx="801.1" cy="230.3" r="1.1" fill="#e4e4e4"/><circle cx="806.2" cy="234.1" r="1.1" fill="#e4e4e4"/><circle cx="802.5" cy="237.6" r="1.2" fill="#e4e4e4"/><circle cx="799.0" cy="235.7" r="0.5" fill="#e4e4e4"/><circle cx="805.4" cy="234.3" r="0.7" fill="#e4e4e4"/><circle cx="795.8" cy="233.4" r="0.5" fill="#e4e4e4"/><circle cx="804.5" cy="238.3" r="0.6" fill="#e4e4e4"/><circle cx="798.7" cy="233.6" r="1.0" fill="#e4e4e4"/><circle cx="806.6" cy="237.8" r="0.7" fill="#e4e4e4"/><circle cx="801.4" cy="232.3" r="0.5" fill="#e4e4e4"/><circle cx="811.5" cy="238.7" r="1.1" fill="#e4e4e4"/><circle cx="794.7" cy="233.3" r="1.2" fill="#e4e4e4"/><circle cx="803.4" cy="236.4" r="0.9" fill="#e4e4e4"/><circle cx="800.2" cy="230.8" r="0.7" fill="#e4e4e4"/><circle cx="796.1" cy="231.2" r="1.2" fill="#e4e4e4"/><circle cx="807.6" cy="238.2" r="1.1" fill="#e4e4e4"/><circle cx="800.1" cy="233.7" r="0.9" fill="#e4e4e4"/><circle cx="810.1" cy="236.7" r="0.7" fill="#e4e4e4"/><circle cx="806.3" cy="238.8" r="0.7" fill="#e4e4e4"/><circle cx="812.7" cy="234.6" r="0.7" fill="#e4e4e4"/><circle cx="799.1" cy="234.6" r="1.4" fill="#e4e4e4"/><circle cx="809.6" cy="235.3" r="1.3" fill="#e4e4e4"/><circle cx="801.9" cy="232.0" r="1.3" fill="#e4e4e4"/><circle cx="806.7" cy="236.9" r="1.1" fill="#e4e4e4"/><circle cx="813.8" cy="237.6" r="1.3" fill="#e4e4e4"/><circle cx="807.6" cy="238.3" r="0.9" fill="#e4e4e4"/><circle cx="808.7" cy="236.6" r="0.8" fill="#e4e4e4"/><circle cx="798.9" cy="233.7" r="0.6" fill="#e4e4e4"/><circle cx="813.0" cy="235.5" r="0.5" fill="#e4e4e4"/><circle cx="796.4" cy="234.6" r="0.8" fill="#e4e4e4"/><circle cx="798.6" cy="230.0" r="0.5" fill="#e4e4e4"/><circle cx="808.0" cy="236.9" r="1.1" fill="#e4e4e4"/><circle cx="810.0" cy="233.6" r="1.0" fill="#e4e4e4"/><circle cx="801.3" cy="236.1" r="1.2" fill="#e4e4e4"/><circle cx="812.8" cy="234.9" r="1.3" fill="#e4e4e4"/><circle cx="811.8" cy="239.6" r="0.6" fill="#e4e4e4"/><circle cx="799.8" cy="230.7" r="0.5" fill="#e4e4e4"/><circle cx="810.7" cy="238.7" r="1.1" fill="#e4e4e4"/><circle cx="810.6" cy="237.5" r="0.8" fill="#e4e4e4"/><circle cx="797.7" cy="230.2" r="1.2" fill="#e4e4e4"/><circle cx="799.3" cy="231.9" r="0.9" fill="#e4e4e4"/><circle cx="795.9" cy="230.7" r="0.8" fill="#e4e4e4"/><circle cx="809.0" cy="235.3" r="0.8" fill="#e4e4e4"/><circle cx="813.4" cy="237.7" r="1.3" fill="#e4e4e4"/><circle cx="807.9" cy="232.3" r="0.9" fill="#e4e4e4"/><circle cx="802.8" cy="236.4" r="0.8" fill="#e4e4e4"/><circle cx="808.4" cy="236.3" r="0.7" fill="#e4e4e4"/><circle cx="812.2" cy="234.8" r="1.2" fill="#e4e4e4"/><circle cx="799.3" cy="230.0" r="0.7" fill="#e4e4e4"/><circle cx="808.7" cy="239.3" r="0.5" fill="#e4e4e4"/><circle cx="804.5" cy="234.7" r="1.2" fill="#e4e4e4"/><circle cx="798.6" cy="232.8" r="0.8" fill="#e4e4e4"/><circle cx="811.4" cy="235.5" r="1.3" fill="#e4e4e4"/><circle cx="801.1" cy="231.7" r="1.1" fill="#e4e4e4"/><circle cx="805.5" cy="231.8" r="1.1" fill="#e4e4e4"/><circle cx="796.2" cy="233.7" r="1.1" fill="#e4e4e4"/><circle cx="809.8" cy="237.3" r="0.8" fill="#e4e4e4"/><circle cx="803.0" cy="233.5" r="1.3" fill="#e4e4e4"/><circle cx="796.1" cy="234.2" r="0.5" fill="#e4e4e4"/><circle cx="799.5" cy="231.6" r="1.3" fill="#e4e4e4"/><circle cx="804.9" cy="233.9" r="1.3" fill="#e4e4e4"/><circle cx="799.6" cy="232.9" r="1.0" fill="#e4e4e4"/><circle cx="809.0" cy="237.9" r="1.1" fill="#e4e4e4"/><circle cx="802.1" cy="232.7" r="0.6" fill="#e4e4e4"/><circle cx="810.9" cy="237.8" r="1.2" fill="#e4e4e4"/><circle cx="798.4" cy="232.4" r="1.2" fill="#e4e4e4"/><circle cx="807.0" cy="232.6" r="0.9" fill="#e4e4e4"/><circle cx="812.4" cy="235.8" r="0.7" fill="#e4e4e4"/><circle cx="800.4" cy="234.9" r="1.3" fill="#e4e4e4"/><circle cx="798.7" cy="230.8" r="0.7" fill="#e4e4e4"/><circle cx="801.3" cy="233.9" r="0.6" fill="#e4e4e4"/><circle cx="802.0" cy="231.7" r="1.4" fill="#e4e4e4"/><circle cx="809.8" cy="233.7" r="1.4" fill="#e4e4e4"/><circle cx="797.2" cy="231.7" r="1.4" fill="#e4e4e4"/><circle cx="809.8" cy="238.0" r="0.9" fill="#e4e4e4"/><circle cx="798.6" cy="233.7" r="0.6" fill="#e4e4e4"/><circle cx="799.2" cy="232.3" r="0.5" fill="#e4e4e4"/><circle cx="802.0" cy="236.2" r="1.1" fill="#e4e4e4"/><circle cx="804.3" cy="235.8" r="0.9" fill="#e4e4e4"/><circle cx="797.6" cy="233.1" r="0.9" fill="#e4e4e4"/><circle cx="808.4" cy="238.8" r="0.9" fill="#e4e4e4"/><circle cx="805.4" cy="237.0" r="0.9" fill="#e4e4e4"/><circle cx="799.0" cy="234.4" r="1.3" fill="#e4e4e4"/><circle cx="809.4" cy="237.7" r="1.3" fill="#e4e4e4"/><circle cx="807.7" cy="236.8" r="0.9" fill="#e4e4e4"/><circle cx="800.8" cy="234.5" r="0.6" fill="#e4e4e4"/><circle cx="802.4" cy="236.3" r="1.1" fill="#e4e4e4"/><circle cx="807.6" cy="233.9" r="0.9" fill="#e4e4e4"/><circle cx="803.5" cy="235.4" r="0.9" fill="#e4e4e4"/><circle cx="807.0" cy="238.7" r="0.7" fill="#e4e4e4"/><circle cx="807.0" cy="237.6" r="0.8" fill="#e4e4e4"/><circle cx="803.3" cy="238.3" r="0.5" fill="#e4e4e4"/><circle cx="806.2" cy="232.6" r="1.2" fill="#e4e4e4"/><path d="M830.885 228.79999999999998 q3.500 -2.500 6 0 l0.500 11 q-3.500 3 -7 0z" fill="#b4b4b4"/><circle cx="868.7" cy="233.3" r="0.6" fill="#dcdcdc"/><circle cx="864.1" cy="232.2" r="1.1" fill="#dcdcdc"/><circle cx="863.2" cy="232.4" r="1.2" fill="#dcdcdc"/><circle cx="863.5" cy="231.5" r="1.4" fill="#dcdcdc"/><circle cx="859.4" cy="231.4" r="0.9" fill="#dcdcdc"/><circle cx="866.8" cy="231.5" r="1.4" fill="#dcdcdc"/><circle cx="861.7" cy="229.8" r="0.7" fill="#dcdcdc"/><circle cx="862.4" cy="229.7" r="0.9" fill="#dcdcdc"/><circle cx="862.0" cy="232.2" r="0.8" fill="#dcdcdc"/><circle cx="860.4" cy="230.1" r="1.2" fill="#dcdcdc"/><circle cx="868.7" cy="233.3" r="0.7" fill="#dcdcdc"/><circle cx="867.0" cy="232.5" r="0.7" fill="#dcdcdc"/><circle cx="858.3" cy="231.3" r="1.2" fill="#dcdcdc"/><circle cx="864.9" cy="232.1" r="1.0" fill="#dcdcdc"/><circle cx="859.3" cy="232.3" r="0.8" fill="#dcdcdc"/><circle cx="864.6" cy="233.4" r="1.2" fill="#dcdcdc"/><circle cx="863.0" cy="230.9" r="1.0" fill="#dcdcdc"/><circle cx="858.2" cy="231.4" r="0.8" fill="#dcdcdc"/><circle cx="867.7" cy="232.3" r="0.8" fill="#dcdcdc"/><circle cx="860.1" cy="230.7" r="0.7" fill="#dcdcdc"/><circle cx="856.8" cy="230.6" r="0.8" fill="#dcdcdc"/><circle cx="860.1" cy="230.3" r="0.9" fill="#dcdcdc"/><circle cx="862.1" cy="232.1" r="1.1" fill="#dcdcdc"/><circle cx="861.0" cy="232.8" r="1.3" fill="#dcdcdc"/><circle cx="857.4" cy="231.1" r="1.3" fill="#dcdcdc"/><circle cx="867.0" cy="231.7" r="1.2" fill="#dcdcdc"/><circle cx="865.3" cy="230.6" r="0.5" fill="#dcdcdc"/><circle cx="868.7" cy="233.7" r="0.7" fill="#dcdcdc"/><circle cx="858.4" cy="229.5" r="0.7" fill="#dcdcdc"/><circle cx="866.7" cy="232.3" r="0.6" fill="#dcdcdc"/><circle cx="868.0" cy="233.9" r="0.7" fill="#dcdcdc"/><circle cx="868.0" cy="233.4" r="1.2" fill="#dcdcdc"/><circle cx="864.9" cy="233.7" r="1.2" fill="#dcdcdc"/><circle cx="867.6" cy="232.1" r="1.1" fill="#dcdcdc"/><circle cx="863.3" cy="232.8" r="0.9" fill="#dcdcdc"/><circle cx="867.9" cy="233.2" r="0.7" fill="#dcdcdc"/><circle cx="860.1" cy="229.8" r="0.9" fill="#dcdcdc"/><circle cx="857.6" cy="230.2" r="0.6" fill="#dcdcdc"/><circle cx="863.0" cy="231.8" r="1.0" fill="#dcdcdc"/><circle cx="868.1" cy="231.7" r="1.3" fill="#dcdcdc"/><circle cx="863.5" cy="236.9" r="1.1" fill="#dcdcdc"/><circle cx="870.2" cy="237.9" r="0.9" fill="#dcdcdc"/><circle cx="872.5" cy="237.7" r="1.1" fill="#dcdcdc"/><circle cx="867.1" cy="235.4" r="1.0" fill="#dcdcdc"/><circle cx="866.9" cy="239.4" r="0.8" fill="#dcdcdc"/><circle cx="872.5" cy="239.1" r="0.9" fill="#dcdcdc"/><circle cx="871.5" cy="237.1" r="1.1" fill="#dcdcdc"/><circle cx="866.5" cy="236.7" r="1.3" fill="#dcdcdc"/><circle cx="861.9" cy="236.1" r="1.0" fill="#dcdcdc"/><circle cx="869.2" cy="237.0" r="0.9" fill="#dcdcdc"/><circle cx="862.7" cy="236.7" r="1.2" fill="#dcdcdc"/><circle cx="860.2" cy="237.2" r="0.9" fill="#dcdcdc"/><circle cx="864.5" cy="235.7" r="1.0" fill="#dcdcdc"/><circle cx="872.3" cy="239.5" r="1.2" fill="#dcdcdc"/><circle cx="861.4" cy="235.2" r="0.8" fill="#dcdcdc"/><circle cx="865.5" cy="237.8" r="1.2" fill="#dcdcdc"/><circle cx="856.0" cy="235.3" r="1.3" fill="#dcdcdc"/><circle cx="865.5" cy="234.9" r="0.8" fill="#dcdcdc"/><circle cx="855.8" cy="233.6" r="1.3" fill="#dcdcdc"/><circle cx="865.9" cy="238.0" r="1.2" fill="#dcdcdc"/><circle cx="871.2" cy="239.1" r="1.1" fill="#dcdcdc"/><circle cx="866.1" cy="238.2" r="1.0" fill="#dcdcdc"/><circle cx="867.6" cy="236.5" r="1.1" fill="#dcdcdc"/><circle cx="863.1" cy="237.8" r="0.6" fill="#dcdcdc"/><circle cx="859.1" cy="233.6" r="1.2" fill="#dcdcdc"/><circle cx="871.2" cy="239.2" r="0.8" fill="#dcdcdc"/><circle cx="869.5" cy="239.3" r="1.0" fill="#dcdcdc"/><circle cx="860.2" cy="234.9" r="0.9" fill="#dcdcdc"/><circle cx="861.1" cy="235.7" r="1.1" fill="#dcdcdc"/><circle cx="872.1" cy="237.4" r="1.0" fill="#dcdcdc"/><circle cx="856.5" cy="233.5" r="1.2" fill="#dcdcdc"/><circle cx="865.0" cy="239.1" r="0.9" fill="#dcdcdc"/><circle cx="855.8" cy="234.2" r="1.0" fill="#dcdcdc"/><circle cx="871.4" cy="240.3" r="0.9" fill="#dcdcdc"/><circle cx="863.1" cy="234.6" r="1.1" fill="#dcdcdc"/><circle cx="859.5" cy="234.2" r="0.5" fill="#dcdcdc"/><circle cx="855.4" cy="235.0" r="0.6" fill="#dcdcdc"/><circle cx="872.6" cy="237.7" r="1.3" fill="#dcdcdc"/><circle cx="858.1" cy="233.4" r="1.1" fill="#dcdcdc"/><circle cx="859.4" cy="236.5" r="0.7" fill="#dcdcdc"/><circle cx="856.1" cy="235.6" r="1.1" fill="#dcdcdc"/><circle cx="870.1" cy="239.3" r="0.6" fill="#dcdcdc"/><circle cx="866.1" cy="238.3" r="0.9" fill="#dcdcdc"/><circle cx="871.9" cy="238.0" r="1.4" fill="#dcdcdc"/><circle cx="868.5" cy="235.9" r="0.5" fill="#dcdcdc"/><circle cx="866.4" cy="238.8" r="0.6" fill="#dcdcdc"/><circle cx="860.6" cy="236.9" r="0.6" fill="#dcdcdc"/><circle cx="870.4" cy="238.4" r="0.6" fill="#dcdcdc"/><circle cx="861.8" cy="236.5" r="0.9" fill="#dcdcdc"/><circle cx="867.6" cy="236.2" r="1.2" fill="#dcdcdc"/><circle cx="861.6" cy="236.8" r="1.1" fill="#dcdcdc"/><circle cx="862.9" cy="235.9" r="1.2" fill="#dcdcdc"/><circle cx="871.7" cy="239.8" r="1.0" fill="#dcdcdc"/><circle cx="861.0" cy="234.1" r="1.4" fill="#dcdcdc"/><circle cx="867.3" cy="239.1" r="0.8" fill="#dcdcdc"/><circle cx="865.4" cy="239.4" r="1.2" fill="#dcdcdc"/><circle cx="866.1" cy="236.4" r="0.9" fill="#dcdcdc"/><circle cx="871.0" cy="238.2" r="1.1" fill="#dcdcdc"/><circle cx="865.5" cy="239.0" r="1.2" fill="#dcdcdc"/><circle cx="860.9" cy="233.8" r="0.7" fill="#dcdcdc"/><circle cx="865.3" cy="240.8" r="1.2" fill="#dcdcdc"/><circle cx="870.1" cy="240.9" r="1.2" fill="#dcdcdc"/><circle cx="869.0" cy="242.4" r="1.0" fill="#dcdcdc"/><circle cx="863.7" cy="241.0" r="1.2" fill="#dcdcdc"/><circle cx="867.7" cy="242.3" r="0.8" fill="#dcdcdc"/><circle cx="862.1" cy="239.8" r="1.2" fill="#dcdcdc"/><circle cx="863.1" cy="240.6" r="1.3" fill="#dcdcdc"/><circle cx="863.5" cy="240.4" r="1.1" fill="#dcdcdc"/><circle cx="866.0" cy="239.9" r="0.7" fill="#dcdcdc"/><circle cx="868.4" cy="242.1" r="0.9" fill="#dcdcdc"/><circle cx="862.0" cy="240.3" r="1.2" fill="#dcdcdc"/><circle cx="863.5" cy="240.3" r="1.3" fill="#dcdcdc"/><circle cx="869.9" cy="241.8" r="0.9" fill="#dcdcdc"/><circle cx="867.2" cy="240.2" r="0.7" fill="#dcdcdc"/><circle cx="863.0" cy="240.4" r="0.8" fill="#dcdcdc"/><circle cx="866.8" cy="240.7" r="1.0" fill="#dcdcdc"/><circle cx="863.0" cy="238.9" r="1.4" fill="#dcdcdc"/><circle cx="865.2" cy="239.4" r="1.1" fill="#dcdcdc"/><circle cx="869.1" cy="240.8" r="1.0" fill="#dcdcdc"/><circle cx="864.6" cy="240.4" r="0.5" fill="#dcdcdc"/><circle cx="861.4" cy="240.5" r="1.3" fill="#dcdcdc"/><circle cx="866.0" cy="241.0" r="0.7" fill="#dcdcdc"/><circle cx="868.9" cy="241.4" r="1.4" fill="#dcdcdc"/><circle cx="868.5" cy="242.2" r="1.4" fill="#dcdcdc"/><circle cx="864.1" cy="239.1" r="0.7" fill="#dcdcdc"/><circle cx="690.3" cy="269.2" r="0.4" fill="#d4d4d4"/><circle cx="682.6" cy="265.0" r="0.8" fill="#d4d4d4"/><circle cx="696.7" cy="265.1" r="0.5" fill="#d4d4d4"/><circle cx="685.8" cy="264.9" r="0.5" fill="#d4d4d4"/><circle cx="693.0" cy="266.7" r="0.9" fill="#d4d4d4"/><circle cx="684.6" cy="261.6" r="1.0" fill="#d4d4d4"/><circle cx="685.7" cy="270.7" r="0.5" fill="#d4d4d4"/><circle cx="697.3" cy="265.9" r="0.6" fill="#d4d4d4"/><circle cx="693.0" cy="268.4" r="0.7" fill="#d4d4d4"/><circle cx="695.7" cy="263.3" r="1.2" fill="#d4d4d4"/><circle cx="696.2" cy="269.6" r="1.0" fill="#d4d4d4"/><circle cx="684.7" cy="261.3" r="0.5" fill="#d4d4d4"/><circle cx="693.7" cy="272.9" r="1.2" fill="#d4d4d4"/><circle cx="687.8" cy="264.1" r="0.9" fill="#d4d4d4"/><circle cx="689.6" cy="265.5" r="0.7" fill="#d4d4d4"/><circle cx="689.4" cy="269.9" r="0.8" fill="#d4d4d4"/><circle cx="691.2" cy="270.6" r="0.5" fill="#d4d4d4"/><circle cx="689.3" cy="267.1" r="1.0" fill="#d4d4d4"/><circle cx="689.9" cy="268.6" r="1.2" fill="#d4d4d4"/><circle cx="690.9" cy="275.1" r="1.2" fill="#d4d4d4"/><circle cx="691.4" cy="266.0" r="0.8" fill="#d4d4d4"/><circle cx="695.8" cy="272.0" r="1.2" fill="#d4d4d4"/><circle cx="686.1" cy="264.0" r="0.7" fill="#d4d4d4"/><circle cx="691.8" cy="263.0" r="1.0" fill="#d4d4d4"/><circle cx="691.6" cy="270.1" r="0.5" fill="#d4d4d4"/><circle cx="688.3" cy="262.1" r="0.5" fill="#d4d4d4"/><circle cx="692.0" cy="265.0" r="0.8" fill="#d4d4d4"/><circle cx="691.6" cy="270.6" r="1.2" fill="#d4d4d4"/><circle cx="688.1" cy="270.0" r="0.8" fill="#d4d4d4"/><circle cx="686.4" cy="274.4" r="0.5" fill="#d4d4d4"/><circle cx="691.0" cy="267.4" r="1.2" fill="#d4d4d4"/><circle cx="688.0" cy="264.9" r="0.8" fill="#d4d4d4"/><circle cx="688.7" cy="271.1" r="0.6" fill="#d4d4d4"/><circle cx="684.3" cy="273.6" r="1.3" fill="#d4d4d4"/><circle cx="691.3" cy="266.7" r="0.7" fill="#d4d4d4"/><circle cx="690.7" cy="266.7" r="1.1" fill="#d4d4d4"/><circle cx="687.4" cy="275.2" r="0.4" fill="#d4d4d4"/><circle cx="691.0" cy="263.7" r="0.5" fill="#d4d4d4"/><circle cx="696.7" cy="267.7" r="0.9" fill="#d4d4d4"/><circle cx="691.4" cy="272.1" r="1.2" fill="#d4d4d4"/><circle cx="690.7" cy="273.2" r="0.5" fill="#d4d4d4"/><circle cx="692.4" cy="273.8" r="1.0" fill="#d4d4d4"/><circle cx="690.1" cy="269.3" r="0.5" fill="#d4d4d4"/><circle cx="685.5" cy="264.3" r="0.6" fill="#d4d4d4"/><circle cx="691.2" cy="273.3" r="1.0" fill="#d4d4d4"/><circle cx="719.5" cy="262.2" r="0.6" fill="#f0f0f0"/><circle cx="724.4" cy="270.3" r="0.8" fill="#f0f0f0"/><circle cx="716.5" cy="266.2" r="1.1" fill="#f0f0f0"/><circle cx="712.2" cy="273.8" r="1.2" fill="#f0f0f0"/><circle cx="716.0" cy="267.6" r="1.2" fill="#f0f0f0"/><circle cx="707.7" cy="268.7" r="0.6" fill="#f0f0f0"/><circle cx="720.3" cy="274.2" r="0.7" fill="#f0f0f0"/><circle cx="719.7" cy="271.4" r="0.9" fill="#f0f0f0"/><circle cx="723.6" cy="267.8" r="0.8" fill="#f0f0f0"/><circle cx="714.0" cy="267.4" r="1.0" fill="#f0f0f0"/><circle cx="720.5" cy="260.9" r="0.7" fill="#f0f0f0"/><circle cx="715.5" cy="263.2" r="1.1" fill="#f0f0f0"/><rect x="737.3" y="272.4" width="2.7" height="0.900" fill="#cfcfcf"/><rect x="746.0" y="267.8" width="1.9" height="0.900" fill="#cfcfcf"/><rect x="746.8" y="261.4" width="2.7" height="0.900" fill="#cfcfcf"/><rect x="740.5" y="263.5" width="1.0" height="0.900" fill="#cfcfcf"/><rect x="741.1" y="271.7" width="0.9" height="0.900" fill="#cfcfcf"/><rect x="738.0" y="270.2" width="1.2" height="0.900" fill="#cfcfcf"/><rect x="736.4" y="268.9" width="2.0" height="0.900" fill="#cfcfcf"/><rect x="746.5" y="270.2" width="1.0" height="0.900" fill="#cfcfcf"/><rect x="753.5" y="270.4" width="0.9" height="0.900" fill="#cfcfcf"/><rect x="738.5" y="267.5" width="1.8" height="0.900" fill="#cfcfcf"/><rect x="741.7" y="262.7" width="1.6" height="0.900" fill="#cfcfcf"/><rect x="738.8" y="268.8" width="2.5" height="0.900" fill="#cfcfcf"/><rect x="739.0" y="268.5" width="2.3" height="0.900" fill="#cfcfcf"/><rect x="739.4" y="271.8" width="2.7" height="0.900" fill="#cfcfcf"/><rect x="743.8" y="266.6" width="2.5" height="0.900" fill="#cfcfcf"/><rect x="746.6" y="266.2" width="2.7" height="0.900" fill="#cfcfcf"/><rect x="751.6" y="265.5" width="1.3" height="0.900" fill="#cfcfcf"/><rect x="742.8" y="266.8" width="2.8" height="0.900" fill="#cfcfcf"/><rect x="752.2" y="273.0" width="2.4" height="0.900" fill="#cfcfcf"/><rect x="753.0" y="261.8" width="1.8" height="0.900" fill="#cfcfcf"/><rect x="755.2" y="273.2" width="1.3" height="0.900" fill="#cfcfcf"/><rect x="744.5" y="269.3" width="1.5" height="0.900" fill="#cfcfcf"/><rect x="746.7" y="262.0" width="1.7" height="0.900" fill="#cfcfcf"/><rect x="746.2" y="261.4" width="1.1" height="0.900" fill="#cfcfcf"/><rect x="755.5" y="271.2" width="2.7" height="0.900" fill="#cfcfcf"/><rect x="748.7" y="271.6" width="2.6" height="0.900" fill="#cfcfcf"/><rect x="753.8" y="261.5" width="2.1" height="0.900" fill="#cfcfcf"/><rect x="741.4" y="269.9" width="1.3" height="0.900" fill="#cfcfcf"/><rect x="746.9" y="273.1" width="2.0" height="0.900" fill="#cfcfcf"/><rect x="741.1" y="267.9" width="1.7" height="0.900" fill="#cfcfcf"/><rect x="755.1" y="264.8" width="1.4" height="0.900" fill="#cfcfcf"/><rect x="749.0" y="262.7" width="2.0" height="0.900" fill="#cfcfcf"/><rect x="755.2" y="267.8" width="1.3" height="0.900" fill="#cfcfcf"/><rect x="745.4" y="268.0" width="1.1" height="0.900" fill="#cfcfcf"/><rect x="738.6" y="262.8" width="1.4" height="0.900" fill="#cfcfcf"/><rect x="744.2" y="264.8" width="1.3" height="0.900" fill="#cfcfcf"/><rect x="737.8" y="268.2" width="2.5" height="0.900" fill="#cfcfcf"/><rect x="748.3" y="268.5" width="2.1" height="0.900" fill="#cfcfcf"/><rect x="740.1" y="270.3" width="1.7" height="0.900" fill="#cfcfcf"/><rect x="747.0" y="269.1" width="1.7" height="0.900" fill="#cfcfcf"/><rect x="742.3" y="264.2" width="1.2" height="0.900" fill="#cfcfcf"/><rect x="746.3" y="266.1" width="2.0" height="0.900" fill="#cfcfcf"/><rect x="736.3" y="265.7" width="2.5" height="0.900" fill="#cfcfcf"/><rect x="740.8" y="268.3" width="1.8" height="0.900" fill="#cfcfcf"/><rect x="741.8" y="273.9" width="1.4" height="0.900" fill="#cfcfcf"/><rect x="751.5" y="263.2" width="0.9" height="0.900" fill="#cfcfcf"/><rect x="753.5" y="266.8" width="0.9" height="0.900" fill="#cfcfcf"/><rect x="743.8" y="266.8" width="2.3" height="0.900" fill="#cfcfcf"/><rect x="738.3" y="264.0" width="2.7" height="0.900" fill="#cfcfcf"/><rect x="750.8" y="263.1" width="1.5" height="0.900" fill="#cfcfcf"/><rect x="743.1" y="269.9" width="2.0" height="0.900" fill="#cfcfcf"/><rect x="753.1" y="271.8" width="1.8" height="0.900" fill="#cfcfcf"/><rect x="750.9" y="270.8" width="2.3" height="0.900" fill="#cfcfcf"/><rect x="745.6" y="271.3" width="2.2" height="0.900" fill="#cfcfcf"/><rect x="754.4" y="262.8" width="2.5" height="0.900" fill="#cfcfcf"/><rect x="736.2" y="271.1" width="2.0" height="0.900" fill="#cfcfcf"/><rect x="746.0" y="273.6" width="1.9" height="0.900" fill="#cfcfcf"/><rect x="744.4" y="271.3" width="2.5" height="0.900" fill="#cfcfcf"/><rect x="748.2" y="266.0" width="1.7" height="0.900" fill="#cfcfcf"/><rect x="745.2" y="270.5" width="1.4" height="0.900" fill="#cfcfcf"/><rect x="743.9" y="268.3" width="1.6" height="0.900" fill="#cfcfcf"/><rect x="742.5" y="271.3" width="2.5" height="0.900" fill="#cfcfcf"/><rect x="746.1" y="266.9" width="1.2" height="0.900" fill="#cfcfcf"/><rect x="742.2" y="263.0" width="2.0" height="0.900" fill="#cfcfcf"/><rect x="747.7" y="262.2" width="2.6" height="0.900" fill="#cfcfcf"/><rect x="742.6" y="272.1" width="2.5" height="0.900" fill="#cfcfcf"/><rect x="755.3" y="263.8" width="1.7" height="0.900" fill="#cfcfcf"/><rect x="754.3" y="261.2" width="0.9" height="0.900" fill="#cfcfcf"/><rect x="747.4" y="267.6" width="2.6" height="0.900" fill="#cfcfcf"/><rect x="751.5" y="268.1" width="2.8" height="0.900" fill="#cfcfcf"/><rect x="746.4" y="267.8" width="2.2" height="0.900" fill="#cfcfcf"/><rect x="743.9" y="265.8" width="2.0" height="0.900" fill="#cfcfcf"/><rect x="743.1" y="273.4" width="2.2" height="0.900" fill="#cfcfcf"/><rect x="746.6" y="262.4" width="1.5" height="0.900" fill="#cfcfcf"/><rect x="744.1" y="268.4" width="1.9" height="0.900" fill="#cfcfcf"/><rect x="753.7" y="273.6" width="1.8" height="0.900" fill="#cfcfcf"/><rect x="744.9" y="269.2" width="2.8" height="0.900" fill="#cfcfcf"/><rect x="742.9" y="268.0" width="2.4" height="0.900" fill="#cfcfcf"/><rect x="739.5" y="265.2" width="2.8" height="0.900" fill="#cfcfcf"/><rect x="752.6" y="267.8" width="1.0" height="0.900" fill="#cfcfcf"/><rect x="754.0" y="270.1" width="2.4" height="0.900" fill="#cfcfcf"/><rect x="755.9" y="272.6" width="1.6" height="0.900" fill="#cfcfcf"/><rect x="739.2" y="264.9" width="1.8" height="0.900" fill="#cfcfcf"/><rect x="746.2" y="263.5" width="1.2" height="0.900" fill="#cfcfcf"/><rect x="748.7" y="268.9" width="1.5" height="0.900" fill="#cfcfcf"/><rect x="755.9" y="269.4" width="0.9" height="0.900" fill="#cfcfcf"/><rect x="744.3" y="271.3" width="1.4" height="0.900" fill="#cfcfcf"/><rect x="749.9" y="261.2" width="1.4" height="0.900" fill="#cfcfcf"/><rect x="752.9" y="268.7" width="2.1" height="0.900" fill="#cfcfcf"/><rect x="740.0" y="267.6" width="1.9" height="0.900" fill="#cfcfcf"/><rect x="741.4" y="269.5" width="1.9" height="0.900" fill="#cfcfcf"/><rect x="756.0" y="268.6" width="1.6" height="0.900" fill="#cfcfcf"/><rect x="738.5" y="263.1" width="2.3" height="0.900" fill="#cfcfcf"/><rect x="738.2" y="262.4" width="1.1" height="0.900" fill="#cfcfcf"/><rect x="746.5" y="271.8" width="2.0" height="0.900" fill="#cfcfcf"/><rect x="752.2" y="261.9" width="0.8" height="0.900" fill="#cfcfcf"/><rect x="751.5" y="265.3" width="2.2" height="0.900" fill="#cfcfcf"/><rect x="743.2" y="263.3" width="1.3" height="0.900" fill="#cfcfcf"/><rect x="738.1" y="272.9" width="2.0" height="0.900" fill="#cfcfcf"/><rect x="743.1" y="266.9" width="1.6" height="0.900" fill="#cfcfcf"/><rect x="737.2" y="272.7" width="2.0" height="0.900" fill="#cfcfcf"/><rect x="755.3" y="266.8" width="2.0" height="0.900" fill="#cfcfcf"/><rect x="741.1" y="261.7" width="2.7" height="0.900" fill="#cfcfcf"/><rect x="753.2" y="265.2" width="2.6" height="0.900" fill="#cfcfcf"/><rect x="752.4" y="265.0" width="2.0" height="0.900" fill="#cfcfcf"/><rect x="755.3" y="267.5" width="2.7" height="0.900" fill="#cfcfcf"/><rect x="740.9" y="266.2" width="2.2" height="0.900" fill="#cfcfcf"/><rect x="740.5" y="265.1" width="2.6" height="0.900" fill="#cfcfcf"/><rect x="745.8" y="271.4" width="1.3" height="0.900" fill="#cfcfcf"/><rect x="739.5" y="265.8" width="1.2" height="0.900" fill="#cfcfcf"/><circle cx="753.5" cy="273.3" r="1.0" fill="#e8e8e8"/><circle cx="753.0" cy="263.0" r="0.8" fill="#e8e8e8"/><circle cx="754.3" cy="266.4" r="0.6" fill="#e8e8e8"/><circle cx="753.4" cy="271.5" r="0.7" fill="#e8e8e8"/><circle cx="753.6" cy="263.9" r="0.7" fill="#e8e8e8"/><circle cx="752.8" cy="262.0" r="0.8" fill="#e8e8e8"/><circle cx="752.6" cy="263.5" r="0.6" fill="#e8e8e8"/><circle cx="752.3" cy="264.8" r="0.6" fill="#e8e8e8"/><circle cx="752.1" cy="266.9" r="1.2" fill="#e8e8e8"/><circle cx="753.4" cy="263.5" r="1.2" fill="#e8e8e8"/><circle cx="751.8" cy="266.1" r="0.7" fill="#e8e8e8"/><circle cx="753.1" cy="273.0" r="0.7" fill="#e8e8e8"/><circle cx="754.1" cy="267.0" r="1.1" fill="#e8e8e8"/><circle cx="752.1" cy="264.7" r="1.0" fill="#e8e8e8"/><circle cx="753.8" cy="266.0" r="1.0" fill="#e8e8e8"/><circle cx="752.2" cy="264.2" r="0.6" fill="#e8e8e8"/><circle cx="752.9" cy="267.8" r="0.7" fill="#e8e8e8"/><circle cx="753.3" cy="270.9" r="1.1" fill="#e8e8e8"/><circle cx="753.6" cy="268.4" r="0.9" fill="#e8e8e8"/><circle cx="753.7" cy="262.6" r="1.3" fill="#e8e8e8"/><circle cx="752.7" cy="265.5" r="0.6" fill="#e8e8e8"/><circle cx="753.5" cy="268.3" r="1.0" fill="#e8e8e8"/><circle cx="754.2" cy="265.2" r="0.8" fill="#e8e8e8"/><circle cx="754.0" cy="264.3" r="1.1" fill="#e8e8e8"/><circle cx="753.3" cy="265.0" r="1.3" fill="#e8e8e8"/><circle cx="752.2" cy="270.9" r="1.3" fill="#e8e8e8"/><circle cx="753.5" cy="263.2" r="0.5" fill="#e8e8e8"/><circle cx="752.7" cy="269.8" r="0.8" fill="#e8e8e8"/><circle cx="752.6" cy="266.6" r="1.1" fill="#e8e8e8"/><circle cx="752.2" cy="264.6" r="0.8" fill="#e8e8e8"/><rect x="777.4" y="263.8" width="1.0" height="0.900" fill="#5e5e5e"/><rect x="781.9" y="270.4" width="2.2" height="0.900" fill="#5e5e5e"/><rect x="768.0" y="262.1" width="1.1" height="0.900" fill="#5e5e5e"/><rect x="770.5" y="265.2" width="1.6" height="0.900" fill="#5e5e5e"/><rect x="768.0" y="265.3" width="2.1" height="0.900" fill="#5e5e5e"/><rect x="770.2" y="271.7" width="1.9" height="0.900" fill="#5e5e5e"/><rect x="778.8" y="264.7" width="1.7" height="0.900" fill="#5e5e5e"/><rect x="778.3" y="265.8" width="0.8" height="0.900" fill="#5e5e5e"/><rect x="780.7" y="270.9" width="1.4" height="0.900" fill="#5e5e5e"/><rect x="768.0" y="271.8" width="2.0" height="0.900" fill="#5e5e5e"/><rect x="768.1" y="264.5" width="1.0" height="0.900" fill="#5e5e5e"/><rect x="780.0" y="264.1" width="2.6" height="0.900" fill="#5e5e5e"/><rect x="779.3" y="262.6" width="2.2" height="0.900" fill="#5e5e5e"/><rect x="773.6" y="270.6" width="2.5" height="0.900" fill="#5e5e5e"/><rect x="771.8" y="262.7" width="2.7" height="0.900" fill="#5e5e5e"/><rect x="774.1" y="272.8" width="2.2" height="0.900" fill="#5e5e5e"/><rect x="779.2" y="271.6" width="2.1" height="0.900" fill="#5e5e5e"/><rect x="774.6" y="262.3" width="2.2" height="0.900" fill="#5e5e5e"/><rect x="774.2" y="267.7" width="2.7" height="0.900" fill="#5e5e5e"/><rect x="769.4" y="270.7" width="0.9" height="0.900" fill="#5e5e5e"/><rect x="778.6" y="271.3" width="1.3" height="0.900" fill="#5e5e5e"/><rect x="776.1" y="273.2" width="2.1" height="0.900" fill="#5e5e5e"/><rect x="776.0" y="264.6" width="0.9" height="0.900" fill="#5e5e5e"/><rect x="773.1" y="266.5" width="1.2" height="0.900" fill="#5e5e5e"/><rect x="772.3" y="263.2" width="2.2" height="0.900" fill="#5e5e5e"/><rect x="778.1" y="264.5" width="1.3" height="0.900" fill="#5e5e5e"/><rect x="775.6" y="266.9" width="2.7" height="0.900" fill="#5e5e5e"/><rect x="773.0" y="265.2" width="2.6" height="0.900" fill="#5e5e5e"/><rect x="769.6" y="268.4" width="1.5" height="0.900" fill="#5e5e5e"/><rect x="780.4" y="268.2" width="2.3" height="0.900" fill="#5e5e5e"/><rect x="770.1" y="269.6" width="2.0" height="0.900" fill="#5e5e5e"/><rect x="774.7" y="270.8" width="2.5" height="0.900" fill="#5e5e5e"/><rect x="769.2" y="265.1" width="1.5" height="0.900" fill="#5e5e5e"/><rect x="770.6" y="262.3" width="1.4" height="0.900" fill="#5e5e5e"/><rect x="770.5" y="270.0" width="1.7" height="0.900" fill="#5e5e5e"/><rect x="769.2" y="265.5" width="1.7" height="0.900" fill="#5e5e5e"/><rect x="773.2" y="263.6" width="0.9" height="0.900" fill="#5e5e5e"/><rect x="767.5" y="273.5" width="2.3" height="0.900" fill="#5e5e5e"/><rect x="768.7" y="270.2" width="2.8" height="0.900" fill="#5e5e5e"/><rect x="776.4" y="262.9" width="1.8" height="0.900" fill="#5e5e5e"/><rect x="774.3" y="263.9" width="1.9" height="0.900" fill="#5e5e5e"/><rect x="767.5" y="272.6" width="2.1" height="0.900" fill="#5e5e5e"/><rect x="777.4" y="272.8" width="2.1" height="0.900" fill="#5e5e5e"/><rect x="771.4" y="264.6" width="1.1" height="0.900" fill="#5e5e5e"/><rect x="767.8" y="270.9" width="2.5" height="0.900" fill="#5e5e5e"/><rect x="772.1" y="263.8" width="2.1" height="0.900" fill="#5e5e5e"/><rect x="780.9" y="272.7" width="1.1" height="0.900" fill="#5e5e5e"/><rect x="779.9" y="271.6" width="2.3" height="0.900" fill="#5e5e5e"/><rect x="772.6" y="263.8" width="2.5" height="0.900" fill="#5e5e5e"/><rect x="772.5" y="266.0" width="1.9" height="0.900" fill="#5e5e5e"/><rect x="773.3" y="271.6" width="1.3" height="0.900" fill="#5e5e5e"/><rect x="768.0" y="268.4" width="2.1" height="0.900" fill="#5e5e5e"/><rect x="780.5" y="270.1" width="2.6" height="0.900" fill="#5e5e5e"/><rect x="782.5" y="267.5" width="1.8" height="0.900" fill="#5e5e5e"/><rect x="769.9" y="265.2" width="2.0" height="0.900" fill="#5e5e5e"/><rect x="768.6" y="269.9" width="1.1" height="0.900" fill="#5e5e5e"/><rect x="774.4" y="273.2" width="1.0" height="0.900" fill="#5e5e5e"/><rect x="768.0" y="266.9" width="1.2" height="0.900" fill="#5e5e5e"/><rect x="778.9" y="261.6" width="2.5" height="0.900" fill="#5e5e5e"/><rect x="781.0" y="271.0" width="1.7" height="0.900" fill="#5e5e5e"/><circle cx="803.5" cy="273.3" r="0.9" fill="#f4f4f4"/><circle cx="801.4" cy="269.5" r="0.8" fill="#f4f4f4"/><circle cx="801.5" cy="261.8" r="1.2" fill="#f4f4f4"/><circle cx="806.3" cy="270.7" r="0.8" fill="#f4f4f4"/><circle cx="801.2" cy="266.1" r="0.6" fill="#f4f4f4"/><circle cx="807.7" cy="269.5" r="0.8" fill="#f4f4f4"/><circle cx="811.1" cy="266.3" r="1.2" fill="#f4f4f4"/><circle cx="811.4" cy="266.4" r="1.0" fill="#f4f4f4"/><circle cx="805.1" cy="266.3" r="1.0" fill="#f4f4f4"/><circle cx="802.0" cy="265.3" r="0.9" fill="#f4f4f4"/><circle cx="808.9" cy="266.2" r="1.0" fill="#f4f4f4"/><circle cx="803.5" cy="271.4" r="1.2" fill="#f4f4f4"/><circle cx="807.2" cy="268.1" r="1.0" fill="#f4f4f4"/><circle cx="803.1" cy="268.2" r="1.0" fill="#f4f4f4"/><circle cx="801.1" cy="271.5" r="0.8" fill="#f4f4f4"/><circle cx="799.7" cy="266.6" r="0.8" fill="#f4f4f4"/><circle cx="806.5" cy="269.4" r="1.2" fill="#f4f4f4"/><circle cx="802.8" cy="267.0" r="1.2" fill="#f4f4f4"/><circle cx="804.6" cy="269.4" r="0.9" fill="#f4f4f4"/><circle cx="804.6" cy="272.5" r="0.9" fill="#f4f4f4"/><circle cx="805.4" cy="272.9" r="0.5" fill="#f4f4f4"/><circle cx="799.5" cy="267.1" r="0.5" fill="#f4f4f4"/><circle cx="803.4" cy="268.5" r="0.8" fill="#f4f4f4"/><circle cx="807.8" cy="263.6" r="1.0" fill="#f4f4f4"/><circle cx="804.7" cy="265.6" r="1.3" fill="#f4f4f4"/><circle cx="804.3" cy="265.7" r="1.1" fill="#f4f4f4"/><circle cx="802.7" cy="269.2" r="1.3" fill="#f4f4f4"/><circle cx="799.1" cy="265.1" r="0.5" fill="#f4f4f4"/><circle cx="804.8" cy="266.3" r="0.6" fill="#f4f4f4"/><circle cx="804.2" cy="268.0" r="0.9" fill="#f4f4f4"/><circle cx="805.4" cy="271.1" r="1.0" fill="#f4f4f4"/><circle cx="798.8" cy="270.7" r="1.0" fill="#f4f4f4"/><circle cx="808.1" cy="263.8" r="1.2" fill="#f4f4f4"/><circle cx="806.3" cy="265.7" r="1.1" fill="#f4f4f4"/><circle cx="801.4" cy="273.0" r="1.0" fill="#f4f4f4"/><circle cx="805.5" cy="265.7" r="0.7" fill="#f4f4f4"/><circle cx="804.1" cy="260.4" r="1.0" fill="#f4f4f4"/><circle cx="809.6" cy="269.1" r="0.5" fill="#f4f4f4"/><circle cx="798.8" cy="265.6" r="0.5" fill="#f4f4f4"/><circle cx="809.5" cy="264.9" r="0.6" fill="#f4f4f4"/><circle cx="833.885" cy="267.59999999999997" r="7.500" fill="#ffffff"/><circle cx="863.9" cy="269.6" r="1.2" fill="#606060"/><circle cx="862.3" cy="267.1" r="0.4" fill="#606060"/><circle cx="865.5" cy="269.6" r="0.6" fill="#606060"/><circle cx="861.6" cy="267.0" r="1.0" fill="#606060"/><circle cx="862.4" cy="268.3" r="1.2" fill="#606060"/><circle cx="860.4" cy="266.9" r="1.1" fill="#606060"/><circle cx="863.4" cy="267.5" r="0.7" fill="#606060"/><circle cx="864.5" cy="269.5" r="1.2" fill="#606060"/><circle cx="863.3" cy="267.2" r="0.6" fill="#606060"/><circle cx="864.3" cy="265.1" r="0.8" fill="#606060"/><circle cx="684.9" cy="297.3" r="1.2" fill="#c8c8c8"/><circle cx="681.8" cy="299.9" r="0.9" fill="#c8c8c8"/><circle cx="691.2" cy="298.2" r="0.6" fill="#c8c8c8"/><circle cx="692.1" cy="294.8" r="0.4" fill="#c8c8c8"/><circle cx="689.6" cy="299.4" r="0.8" fill="#c8c8c8"/><circle cx="683.5" cy="295.7" r="0.7" fill="#c8c8c8"/><circle cx="693.3" cy="297.1" r="0.7" fill="#c8c8c8"/><circle cx="692.5" cy="297.4" r="1.3" fill="#c8c8c8"/><circle cx="690.0" cy="297.4" r="1.0" fill="#c8c8c8"/><circle cx="687.0" cy="299.3" r="0.9" fill="#c8c8c8"/><circle cx="687.1" cy="300.6" r="0.9" fill="#c8c8c8"/><circle cx="695.2" cy="295.7" r="0.4" fill="#c8c8c8"/><circle cx="681.2" cy="295.4" r="1.2" fill="#c8c8c8"/><circle cx="688.5" cy="293.2" r="1.0" fill="#c8c8c8"/><circle cx="685.1" cy="298.8" r="1.1" fill="#c8c8c8"/><circle cx="692.9" cy="293.5" r="1.0" fill="#c8c8c8"/><circle cx="685.3" cy="301.0" r="1.1" fill="#c8c8c8"/><circle cx="681.5" cy="296.8" r="0.7" fill="#c8c8c8"/><circle cx="683.1" cy="296.1" r="0.5" fill="#c8c8c8"/><circle cx="685.4" cy="299.2" r="1.3" fill="#c8c8c8"/><circle cx="683.2" cy="297.3" r="0.6" fill="#c8c8c8"/><circle cx="687.9" cy="299.6" r="0.5" fill="#c8c8c8"/><circle cx="694.9" cy="297.2" r="0.8" fill="#c8c8c8"/><circle cx="682.2" cy="298.2" r="0.7" fill="#c8c8c8"/><circle cx="688.3" cy="297.9" r="0.7" fill="#c8c8c8"/><circle cx="685.2" cy="300.9" r="0.9" fill="#c8c8c8"/><circle cx="691.4" cy="296.0" r="1.2" fill="#c8c8c8"/><circle cx="686.0" cy="296.5" r="0.6" fill="#c8c8c8"/><circle cx="680.6" cy="294.6" r="0.7" fill="#c8c8c8"/><circle cx="688.3" cy="294.0" r="1.2" fill="#c8c8c8"/><circle cx="692.3" cy="298.3" r="1.2" fill="#c8c8c8"/><circle cx="687.0" cy="299.2" r="0.4" fill="#c8c8c8"/><circle cx="689.4" cy="299.0" r="1.0" fill="#c8c8c8"/><circle cx="688.4" cy="299.8" r="0.6" fill="#c8c8c8"/><circle cx="681.7" cy="294.2" r="1.0" fill="#c8c8c8"/><circle cx="689.7" cy="300.9" r="1.3" fill="#c8c8c8"/><circle cx="686.1" cy="296.4" r="1.1" fill="#c8c8c8"/><circle cx="690.5" cy="295.2" r="0.5" fill="#c8c8c8"/><circle cx="689.6" cy="300.2" r="1.2" fill="#c8c8c8"/><circle cx="682.7" cy="293.3" r="0.6" fill="#c8c8c8"/><circle cx="714.9" cy="302.0" r="1.0" fill="#9a9a9a"/><circle cx="713.5" cy="300.8" r="0.7" fill="#9a9a9a"/><circle cx="719.6" cy="299.8" r="0.4" fill="#9a9a9a"/><circle cx="715.0" cy="297.5" r="0.8" fill="#9a9a9a"/><circle cx="715.0" cy="298.0" r="0.8" fill="#9a9a9a"/><circle cx="721.6" cy="299.3" r="0.9" fill="#9a9a9a"/><circle cx="717.7" cy="298.9" r="1.0" fill="#9a9a9a"/><circle cx="716.4" cy="297.0" r="0.5" fill="#9a9a9a"/><circle cx="717.7" cy="300.0" r="1.1" fill="#9a9a9a"/><circle cx="720.5" cy="300.9" r="0.8" fill="#9a9a9a"/><circle cx="713.3" cy="298.3" r="0.9" fill="#9a9a9a"/><circle cx="714.8" cy="296.5" r="0.7" fill="#9a9a9a"/><circle cx="716.7" cy="297.2" r="1.0" fill="#9a9a9a"/><circle cx="717.2" cy="295.6" r="0.7" fill="#9a9a9a"/><circle cx="717.5" cy="295.1" r="0.8" fill="#9a9a9a"/><circle cx="716.2" cy="301.7" r="1.2" fill="#9a9a9a"/><circle cx="717.0" cy="299.2" r="0.8" fill="#9a9a9a"/><circle cx="714.4" cy="296.2" r="0.7" fill="#9a9a9a"/><circle cx="718.9" cy="298.9" r="1.1" fill="#9a9a9a"/><circle cx="717.3" cy="299.3" r="0.5" fill="#9a9a9a"/><circle cx="719.9" cy="300.0" r="0.9" fill="#9a9a9a"/><circle cx="718.8" cy="302.5" r="0.7" fill="#9a9a9a"/><circle cx="717.9" cy="300.1" r="1.1" fill="#9a9a9a"/><circle cx="718.3" cy="298.4" r="0.4" fill="#9a9a9a"/><circle cx="717.2" cy="297.3" r="1.3" fill="#9a9a9a"/><circle cx="740.7" cy="297.0" r="0.7" fill="#c8c8c8"/><circle cx="747.4" cy="294.0" r="0.7" fill="#c8c8c8"/><circle cx="747.6" cy="296.3" r="1.1" fill="#c8c8c8"/><circle cx="751.0" cy="298.5" r="0.8" fill="#c8c8c8"/><circle cx="746.9" cy="296.3" r="0.9" fill="#c8c8c8"/><circle cx="740.5" cy="299.5" r="1.3" fill="#c8c8c8"/><circle cx="744.1" cy="295.5" r="0.6" fill="#c8c8c8"/><circle cx="745.7" cy="300.0" r="0.6" fill="#c8c8c8"/><circle cx="747.8" cy="301.1" r="1.0" fill="#c8c8c8"/><circle cx="744.0" cy="301.8" r="0.6" fill="#c8c8c8"/><circle cx="744.0" cy="296.3" r="1.2" fill="#c8c8c8"/><circle cx="748.2" cy="295.3" r="1.1" fill="#c8c8c8"/><circle cx="747.5" cy="294.9" r="0.7" fill="#c8c8c8"/><circle cx="739.6" cy="297.4" r="0.5" fill="#c8c8c8"/><circle cx="744.0" cy="293.7" r="0.8" fill="#c8c8c8"/><circle cx="740.4" cy="294.8" r="0.6" fill="#c8c8c8"/><circle cx="748.9" cy="295.2" r="1.1" fill="#c8c8c8"/><circle cx="747.7" cy="295.6" r="1.2" fill="#c8c8c8"/><circle cx="749.5" cy="296.9" r="0.4" fill="#c8c8c8"/><circle cx="751.3" cy="300.2" r="0.4" fill="#c8c8c8"/><circle cx="748.0" cy="296.2" r="1.1" fill="#c8c8c8"/><circle cx="748.0" cy="298.0" r="1.0" fill="#c8c8c8"/><circle cx="749.2" cy="298.4" r="1.2" fill="#c8c8c8"/><circle cx="744.7" cy="292.5" r="1.3" fill="#c8c8c8"/><circle cx="748.9" cy="297.4" r="1.1" fill="#c8c8c8"/><circle cx="745.7" cy="296.3" r="0.9" fill="#c8c8c8"/><circle cx="746.6" cy="300.0" r="0.5" fill="#c8c8c8"/><circle cx="753.0" cy="297.6" r="0.7" fill="#c8c8c8"/><circle cx="747.5" cy="296.0" r="0.8" fill="#c8c8c8"/><circle cx="748.8" cy="299.3" r="0.6" fill="#c8c8c8"/><circle cx="745.2" cy="295.5" r="1.1" fill="#c8c8c8"/><circle cx="744.2" cy="297.0" r="0.7" fill="#c8c8c8"/><circle cx="739.4" cy="297.1" r="0.7" fill="#c8c8c8"/><circle cx="747.6" cy="301.8" r="1.2" fill="#c8c8c8"/><circle cx="745.7" cy="294.7" r="0.6" fill="#c8c8c8"/><circle cx="745.9" cy="298.0" r="0.4" fill="#c8c8c8"/><circle cx="742.0" cy="296.8" r="0.9" fill="#c8c8c8"/><circle cx="745.8" cy="297.2" r="1.0" fill="#c8c8c8"/><circle cx="743.3" cy="294.2" r="0.9" fill="#c8c8c8"/><circle cx="743.5" cy="292.4" r="1.2" fill="#c8c8c8"/><circle cx="774.4" cy="294.2" r="0.7" fill="#e0e0e0"/><circle cx="768.5" cy="299.4" r="0.7" fill="#e0e0e0"/><circle cx="771.8" cy="298.9" r="0.5" fill="#e0e0e0"/><circle cx="775.7" cy="297.0" r="0.9" fill="#e0e0e0"/><circle cx="778.5" cy="296.0" r="0.9" fill="#e0e0e0"/><circle cx="772.9" cy="298.5" r="0.6" fill="#e0e0e0"/><circle cx="780.7" cy="300.0" r="1.1" fill="#e0e0e0"/><circle cx="776.5" cy="296.6" r="1.0" fill="#e0e0e0"/><circle cx="772.6" cy="300.4" r="0.9" fill="#e0e0e0"/><circle cx="772.2" cy="301.5" r="0.4" fill="#e0e0e0"/><circle cx="775.2" cy="292.5" r="0.9" fill="#e0e0e0"/><circle cx="768.7" cy="294.3" r="0.6" fill="#e0e0e0"/><circle cx="770.7" cy="294.0" r="0.7" fill="#e0e0e0"/><circle cx="774.3" cy="294.2" r="0.9" fill="#e0e0e0"/><circle cx="770.5" cy="294.4" r="0.7" fill="#e0e0e0"/><circle cx="771.5" cy="294.5" r="0.6" fill="#e0e0e0"/><circle cx="772.6" cy="295.5" r="1.2" fill="#e0e0e0"/><circle cx="768.9" cy="297.7" r="0.9" fill="#e0e0e0"/><circle cx="800.6" cy="297.3" r="0.5" fill="#e8e8e8"/><circle cx="810.7" cy="295.5" r="0.9" fill="#e8e8e8"/><circle cx="795.9" cy="296.2" r="0.6" fill="#e8e8e8"/><circle cx="808.8" cy="300.9" r="0.8" fill="#e8e8e8"/><circle cx="798.9" cy="293.6" r="1.2" fill="#e8e8e8"/><circle cx="805.6" cy="296.4" r="0.7" fill="#e8e8e8"/><circle cx="809.0" cy="293.1" r="0.5" fill="#e8e8e8"/><circle cx="807.1" cy="298.8" r="0.5" fill="#e8e8e8"/><circle cx="799.2" cy="300.4" r="0.9" fill="#e8e8e8"/><circle cx="802.4" cy="297.3" r="0.8" fill="#e8e8e8"/><circle cx="835.1" cy="300.0" r="0.8" fill="#c0c0c0"/><circle cx="832.6" cy="300.1" r="1.1" fill="#c0c0c0"/><circle cx="863.155" cy="300.0" r="4.500" fill="url(#soft)"/></g></svg>
<div class="t" style="left:682.3px;top:211.2px;font-size:10px;color:#ececec;letter-spacing:-0.33px;">30</div>
<div class="t" style="left:709.0px;top:211.2px;font-size:10px;color:#ececec;letter-spacing:-0.33px;">123</div>
<div class="t" style="left:743.5px;top:211.2px;font-size:10px;color:#ececec;letter-spacing:-0.33px;">8</div>
<div class="t" style="left:770.1px;top:211.2px;font-size:10px;color:#ececec;letter-spacing:-0.33px;">10</div>
<div class="t" style="left:799.4px;top:211.2px;font-size:10px;color:#ececec;letter-spacing:-0.33px;">25</div>
<div class="t" style="left:826.4px;top:211.2px;font-size:10px;color:#ececec;letter-spacing:-0.32px;">112</div>
<div class="t" style="left:857.9px;top:211.2px;font-size:10px;color:#ececec;letter-spacing:-0.33px;">60</div>
<div class="t" style="left:682.3px;top:244.0px;font-size:10px;color:#ececec;letter-spacing:-0.33px;">50</div>
<div class="t" style="left:711.6px;top:244.0px;font-size:10px;color:#ececec;letter-spacing:-0.33px;">25</div>
<div class="t" style="left:740.8px;top:244.0px;font-size:10px;color:#ececec;letter-spacing:-0.33px;">30</div>
<div class="t" style="left:770.1px;top:244.0px;font-size:10px;color:#ececec;letter-spacing:-0.33px;">50</div>
<div class="t" style="left:799.4px;top:244.0px;font-size:10px;color:#ececec;letter-spacing:-0.33px;">60</div>
<div class="t" style="left:826.0px;top:244.0px;font-size:10px;color:#ececec;letter-spacing:-0.33px;">100</div>
<div class="t" style="left:855.3px;top:244.0px;font-size:10px;color:#ececec;letter-spacing:-0.33px;">127</div>
<div class="t" style="left:679.7px;top:276.8px;font-size:10px;color:#ececec;letter-spacing:-0.33px;">284</div>
<div class="t" style="left:711.6px;top:276.8px;font-size:10px;color:#ececec;letter-spacing:-0.33px;">80</div>
<div class="t" style="left:738.2px;top:276.8px;font-size:10px;color:#ececec;letter-spacing:-0.33px;">174</div>
<div class="t" style="left:767.5px;top:276.8px;font-size:10px;color:#ececec;letter-spacing:-0.33px;">175</div>
<div class="t" style="left:796.8px;top:276.8px;font-size:10px;color:#ececec;letter-spacing:-0.33px;">306</div>
<div class="t" style="left:828.7px;top:276.8px;font-size:10px;color:#ececec;letter-spacing:-0.33px;">50</div>
<div class="t" style="left:857.9px;top:276.8px;font-size:10px;color:#ececec;letter-spacing:-0.33px;">16</div>
<div class="abs" style="left:672.5px;top:191.5px;width:30.3px;height:33.5px;border:1px solid #4b96ee;border-width:2px;"></div>
<div class="abs" style="left:879.0px;top:191.5px;width:7.0px;height:112.0px;background:#4e4e4e;"></div>
<div class="abs" style="left:880.0px;top:192.0px;width:5.0px;height:74.0px;background:#6c6c6c;border-radius:2.5px;"></div>
<div class="t" style="left:671.8px;top:314.6px;font-size:10.5px;color:#dcdcdc;letter-spacing:-0.52px;">Dimensione</div>
<div class="abs" style="left:832.3px;top:312.8px;width:61.9px;height:17.9px;background:#464646;border:1px solid #2f66d0;border-width:2px;"></div>
<div class="t" style="left:836.5px;top:314.8px;font-size:10.5px;color:#f2f2f2;letter-spacing:-0.59px;">123 px</div>
<div class="abs" style="left:675.5px;top:339.5px;width:213.5px;height:3.0px;background:#707070;border-radius:1.5px;"></div>
<svg class="abs" style="left:787.8px;top:342.0px;" width="13" height="13.5" viewBox="0 0 13 13.5"><path d="M6.500 1.200 L11.600 9 Q12.200 12.200 9.200 12.300 H3.800 Q0.800 12.200 1.400 9 Z" fill="#ffffff" stroke="#222222" stroke-width="1.100" stroke-linejoin="round"/></svg>
<div class="abs" style="left:671.8px;top:364.3px;width:9.0px;height:9.0px;background:#4a4a4a;border:1px solid #7a7a7a;border-radius:1.5px;"></div>
<div class="t" style="left:687.9px;top:361.8px;font-size:10.5px;color:#ececec;letter-spacing:-0.18px;">Rifletti X</div>
<div class="abs" style="left:731.4px;top:364.3px;width:9.0px;height:9.0px;background:#4a4a4a;border:1px solid #7a7a7a;border-radius:1.5px;"></div>
<div class="t" style="left:747.4px;top:361.8px;font-size:10.5px;color:#ececec;letter-spacing:-0.19px;">Rifletti Y</div>
<div class="abs" style="left:800.5px;top:359.2px;width:70.2px;height:78.8px;background:#4f4f4f;border:1px solid #5e5e5e;"></div>
<svg class="abs" style="left:800.5px;top:359.7px;" width="70" height="78" viewBox="0 0 70 78"><g fill="none" stroke="#777777" stroke-width="0.900"><path d="M35.400 12.300 V65.700 M11.800 38.800 H59"/></g><ellipse cx="35.400" cy="38.800" rx="23.600" ry="26.700" fill="none" stroke="#c2c2c2" stroke-width="1.100"/><circle cx="35.400" cy="12.300" r="3.200" fill="#f4f4f4"/><circle cx="35.400" cy="65.700" r="3.200" fill="#f4f4f4"/><path d="M61 35.800 L66.400 38.800 L61 41.800Z" fill="#f0f0f0"/></svg>
<div class="t" style="left:692.5px;top:392.6px;font-size:10.5px;color:#dcdcdc;letter-spacing:-0.42px;">Angolo:</div>
<div class="abs" style="left:729.8px;top:391.6px;width:55.2px;height:15.7px;background:#464646;border:1px solid #636363;"></div>
<div class="t" style="left:733.5px;top:392.6px;font-size:10.5px;color:#f2f2f2;">0°</div>
<div class="t" style="left:680.5px;top:418.5px;font-size:10.5px;color:#dcdcdc;letter-spacing:-0.32px;">Rotondità:</div>
<div class="abs" style="left:729.8px;top:417.5px;width:55.2px;height:15.7px;background:#464646;border:1px solid #636363;"></div>
<div class="t" style="left:733.5px;top:418.5px;font-size:10.5px;color:#f2f2f2;letter-spacing:-0.59px;">100%</div>
<div class="t" style="left:671.8px;top:444.0px;font-size:10.5px;color:#dcdcdc;letter-spacing:-0.51px;">Durezza</div>
<div class="abs" style="left:837.7px;top:442.8px;width:55.5px;height:16.0px;background:#464646;border:1px solid #636363;"></div>
<div class="t" style="left:841.5px;top:444.0px;font-size:10.5px;color:#f2f2f2;letter-spacing:-0.80px;">0%</div>
<div class="abs" style="left:675.5px;top:466.0px;width:213.5px;height:3.0px;background:#707070;border-radius:1.5px;"></div>
<svg class="abs" style="left:667.5px;top:468.3px;" width="13" height="13.5" viewBox="0 0 13 13.5"><path d="M6.500 1.200 L11.600 9 Q12.200 12.200 9.200 12.300 H3.800 Q0.800 12.200 1.400 9 Z" fill="#ffffff" stroke="#222222" stroke-width="1.100" stroke-linejoin="round"/></svg>
<div class="abs" style="left:671.8px;top:488.8px;width:9.0px;height:9.0px;background:#e8e8e8;border-radius:1.5px;"></div>
<svg class="abs" style="left:672.8px;top:489.8px;" width="7" height="7" viewBox="0 0 7 7"><path d="M1 3.600 L2.900 5.600 L6.200 1.200" fill="none" stroke="#2c2c2c" stroke-width="1.500"/></svg>
<div class="t" style="left:687.9px;top:486.3px;font-size:10.5px;color:#ececec;letter-spacing:-0.41px;">Spaziatura</div>
<div class="abs" style="left:837.7px;top:485.0px;width:55.5px;height:16.0px;background:#464646;border:1px solid #636363;"></div>
<div class="t" style="left:841.5px;top:486.3px;font-size:10.5px;color:#f2f2f2;letter-spacing:-0.67px;">25%</div>
<div class="abs" style="left:675.5px;top:507.5px;width:213.5px;height:3.0px;background:#707070;border-radius:1.5px;"></div>
<svg class="abs" style="left:693.1px;top:510.0px;" width="13" height="13.5" viewBox="0 0 13 13.5"><path d="M6.500 1.200 L11.600 9 Q12.200 12.200 9.200 12.300 H3.800 Q0.800 12.200 1.400 9 Z" fill="#ffffff" stroke="#222222" stroke-width="1.100" stroke-linejoin="round"/></svg>
<div class="abs" style="left:535.5px;top:556.0px;width:365.0px;height:1.0px;background:#444444;"></div>
<div class="abs" style="left:540.0px;top:559.4px;width:354.0px;height:102.6px;background:#6b6b6b;"></div>
<svg class="abs" style="left:540px;top:559.4px" width="354" height="102.600" viewBox="540 559.400 354 102.600"><defs><filter id="bl" filterUnits="userSpaceOnUse" x="520" y="540" width="400" height="140"><feGaussianBlur stdDeviation="8.500"/></filter><filter id="bl2" filterUnits="userSpaceOnUse" x="520" y="540" width="400" height="140"><feGaussianBlur stdDeviation="4.500"/></filter></defs><path d="M571 612 C592 590 640 586 682 601 C722 616 760 633 800 630 C824 628 842 621 854 612" fill="none" stroke="#ffffff" stroke-width="39" stroke-linecap="round" filter="url(#bl)"/><path d="M571 612 C592 590 640 586 682 601 C722 616 760 633 800 630 C824 628 842 621 854 612" fill="none" stroke="#ffffff" stroke-width="28" stroke-linecap="round" filter="url(#bl2)"/></svg>
<div class="abs" style="left:535.5px;top:666.0px;width:365.0px;height:1.0px;background:#3e3e3e;"></div>
<svg class="abs" style="left:862.0px;top:674.0px;" width="11" height="12" viewBox="0 0 11 12"><rect x="0.700" y="0.700" width="9.600" height="10.600" fill="none" stroke="#dcdcdc" stroke-width="1.300"/><path d="M5.500 3.400 V8.600 M2.900 6 H8.100" stroke="#dcdcdc" stroke-width="1.300"/></svg>
<div class="abs" style="left:535.5px;top:692.5px;width:365.0px;height:1.0px;background:#3a3a3a;"></div>
<div class="abs" style="left:535.5px;top:693.5px;width:365.0px;height:7.0px;background:#4a4a4a;border-radius:0 0 0 3px;"></div>
<div class="abs" style="left:708.0px;top:696.0px;width:18.0px;height:2.0px;background:#404040;"></div>
<div class="abs" style="left:884px;top:160px;width:266px;height:143.5px;background:radial-gradient(ellipse 150px 55px at 82% 0%,rgba(92,20,20,0.550) 0%,rgba(70,26,26,0.280) 55%,rgba(46,43,43,0) 100%),rgba(49,47,47,0.975);border:1px solid #5c5a5a;border-radius:6.500px;box-shadow:0 0 0 0.500px #1c1c1c,0 6px 16px rgba(0,0,0,0.350)"></div>
<div class="t" style="left:906.0px;top:167.8px;font-size:13px;color:#f4f4f4;letter-spacing:-0.26px;-webkit-text-stroke:0.350px #f4f4f4;">Nuovo pennello predefinito...</div>
<div class="abs" style="left:893.0px;top:190.0px;width:247.0px;height:1.0px;background:#555353;"></div>
<div class="t" style="left:906.0px;top:198.0px;font-size:13px;color:#f4f4f4;letter-spacing:-0.26px;-webkit-text-stroke:0.350px #f4f4f4;">Cancella controlli pennello</div>
<div class="t" style="left:906.0px;top:215.8px;font-size:13px;color:#f4f4f4;letter-spacing:-0.20px;-webkit-text-stroke:0.350px #f4f4f4;">Ripristina tutte le impostazioni bloccate</div>
<div class="t" style="left:906.0px;top:234.3px;font-size:13px;color:#6f6d6d;letter-spacing:-0.21px;">Copia texture su altri strumenti</div>
<div class="abs" style="left:893.0px;top:256.5px;width:247.0px;height:1.0px;background:#555353;"></div>
<div class="t" style="left:906.0px;top:263.8px;font-size:13px;color:#f4f4f4;letter-spacing:-0.34px;-webkit-text-stroke:0.350px #f4f4f4;">Chiudi</div>
<div class="t" style="left:906.0px;top:282.3px;font-size:13px;color:#f4f4f4;letter-spacing:-0.27px;-webkit-text-stroke:0.350px #f4f4f4;">Chiudi gruppo di schede</div>
</body></html>
